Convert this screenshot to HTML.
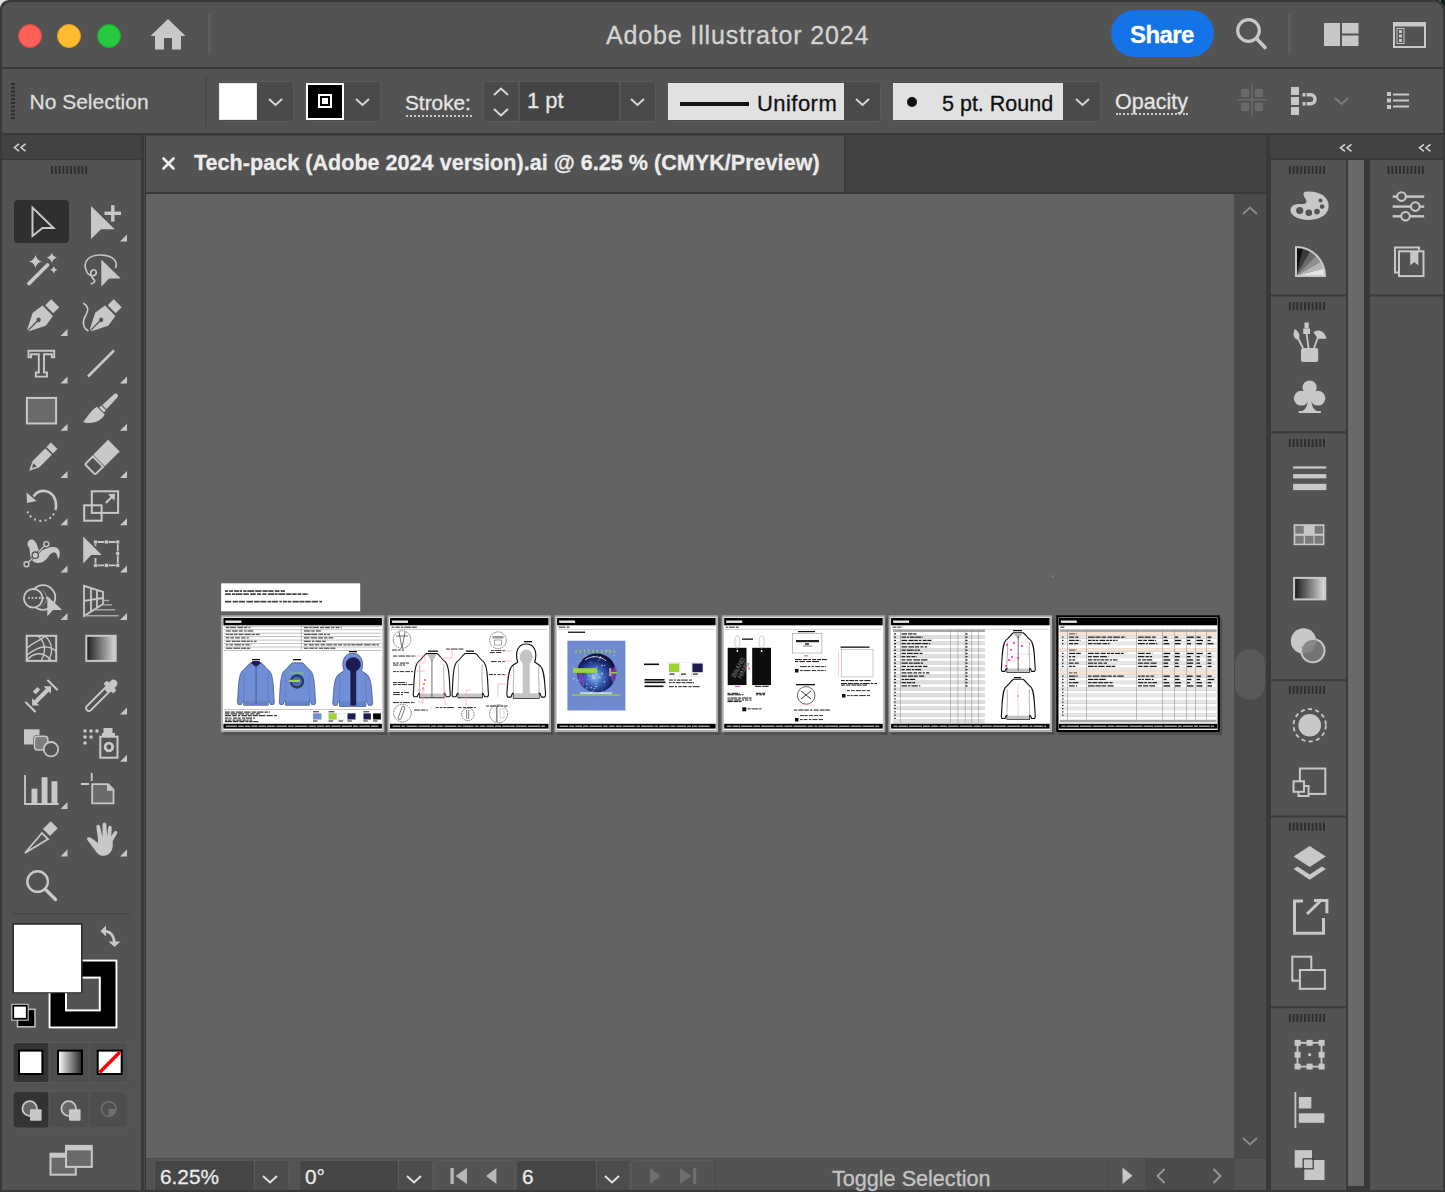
<!DOCTYPE html>
<html><head><meta charset="utf-8">
<style>
*{box-sizing:border-box;margin:0;padding:0}
html,body{width:1445px;height:1192px;overflow:hidden;background:#3a3a3a;font-family:"Liberation Sans",sans-serif}
.a{position:absolute}
svg{position:absolute;overflow:visible}
.t{position:absolute;white-space:nowrap;line-height:1;-webkit-text-stroke:0.3px currentColor}
</style></head><body>
<div class="a" style="left:0;top:0;width:1445px;height:1192px;background:#3a3a3a;overflow:hidden">
<div class="a" style="left:0;top:0;width:12px;height:12px;background:#dcdedd"></div><div class="a" style="left:1433px;top:0;width:12px;height:12px;background:#0c1d22"></div><div class="a" style="left:1439px;top:0;width:2px;height:4px;background:#4a7a3a"></div>
<!-- window -->
<div class="a" id="win" style="left:0;top:0;width:1445px;height:1192px;background:#393939;border-radius:9px 9px 0 0;overflow:hidden">

<!-- title bar -->
<div class="a" style="left:2px;top:2px;width:1441px;height:65px;background:#535353;border-radius:9px 9px 0 0"></div>

<!-- traffic lights -->
<div class="a" style="left:18px;top:24px;width:24px;height:24px;border-radius:50%;background:#fe5f57;border:1px solid #e2463f"></div>
<div class="a" style="left:57px;top:24px;width:24px;height:24px;border-radius:50%;background:#febc2e;border:1px solid #e1a325"></div>
<div class="a" style="left:97px;top:24px;width:24px;height:24px;border-radius:50%;background:#28c840;border:1px solid #1aab29"></div>
<!-- home -->
<svg style="left:150px;top:19px" width="36" height="31" viewBox="0 0 36 31"><path d="M18 0 L35.5 17 L31 17 L31 30.5 L22 30.5 L22 19 L14 19 L14 30.5 L5 30.5 L5 17 L0.5 17 Z" fill="#c8c8c8"/></svg>
<div class="a" style="left:208px;top:14px;width:3px;height:39px;background:#5c5c5c"></div>
<div class="t" style="left:606px;top:22.5px;font-size:25px;letter-spacing:0.85px;color:#d4d4d4">Adobe Illustrator 2024</div>
<!-- share -->
<div class="a" style="left:1111px;top:10px;width:103px;height:47px;border-radius:24px;background:#1473e6"></div>
<div class="t" style="left:1130px;top:23px;font-size:24px;font-weight:bold;letter-spacing:-0.6px;color:#fff">Share</div>
<!-- search -->
<svg style="left:1235px;top:18px" width="32" height="32" viewBox="0 0 32 32"><circle cx="13.5" cy="12.5" r="10.8" fill="none" stroke="#c8c8c8" stroke-width="3.2"/><path d="M21.5 20.5 L30 29.5" stroke="#c8c8c8" stroke-width="3.6" stroke-linecap="round"/></svg>
<div class="a" style="left:1288px;top:14px;width:3px;height:39px;background:#5c5c5c"></div>
<!-- workspace icon -->
<svg style="left:1324px;top:23px" width="35" height="23" viewBox="0 0 35 23"><rect x="0" y="0" width="16" height="23" fill="#c8c8c8"/><rect x="18" y="0" width="16.5" height="10.5" fill="#c8c8c8"/><rect x="18" y="12.5" width="16.5" height="10.5" fill="#c8c8c8"/></svg>
<!-- window icon -->
<svg style="left:1393px;top:22px" width="33" height="26" viewBox="0 0 33 26"><rect x="1" y="1" width="31" height="24" fill="none" stroke="#c8c8c8" stroke-width="2"/><rect x="1" y="1" width="31" height="3.5" fill="#c8c8c8"/><rect x="6" y="8" width="3" height="3" fill="#c8c8c8"/><rect x="6" y="12.5" width="3" height="3" fill="#c8c8c8"/><rect x="6" y="17" width="3" height="3" fill="#c8c8c8"/><rect x="4" y="6.5" width="7" height="15" fill="none" stroke="#c8c8c8" stroke-width="1"/></svg>

<!-- control bar -->
<div class="a" style="left:2px;top:69px;width:1441px;height:64px;background:#535353"></div>

<!-- grip -->
<svg style="left:11px;top:83px" width="5" height="38" viewBox="0 0 5 38"><rect x="0" y="0.0" width="4" height="2" fill="#2e2e2e"/><rect x="0" y="3.8" width="4" height="2" fill="#2e2e2e"/><rect x="0" y="7.6" width="4" height="2" fill="#2e2e2e"/><rect x="0" y="11.399999999999999" width="4" height="2" fill="#2e2e2e"/><rect x="0" y="15.2" width="4" height="2" fill="#2e2e2e"/><rect x="0" y="19.0" width="4" height="2" fill="#2e2e2e"/><rect x="0" y="22.799999999999997" width="4" height="2" fill="#2e2e2e"/><rect x="0" y="26.599999999999998" width="4" height="2" fill="#2e2e2e"/><rect x="0" y="30.4" width="4" height="2" fill="#2e2e2e"/><rect x="0" y="34.199999999999996" width="4" height="2" fill="#2e2e2e"/></svg>
<div class="t" style="left:29.5px;top:90.8px;font-size:21px;color:#dcdcdc">No Selection</div>
<div class="a" style="left:205px;top:77px;width:2px;height:49px;background:#4b4b4b"></div>
<!-- fill -->
<div class="a" style="left:218px;top:81px;width:76px;height:41px;border-radius:4px;background:#4a4a4a;border:1px solid #5a5a5a"></div>
<div class="a" style="left:219px;top:83px;width:38px;height:37px;background:#fff;border:1px solid #e8e8e8"></div>
<svg style="left:268px;top:98px" width="15" height="8" viewBox="0 0 15 8"><path d="M1 1 L7.5 7 L14 1" fill="none" stroke="#d8d8d8" stroke-width="2"/></svg>
<!-- stroke -->
<div class="a" style="left:305px;top:81px;width:76px;height:41px;border-radius:4px;background:#4a4a4a;border:1px solid #5a5a5a"></div>
<div class="a" style="left:306px;top:83px;width:38px;height:37px;background:#000;border:2px solid #fff"></div>
<div class="a" style="left:318px;top:94px;width:14px;height:14px;border:2px solid #fff"></div>
<div class="a" style="left:322px;top:98px;width:6px;height:6px;background:#fff"></div>
<svg style="left:355px;top:98px" width="15" height="8" viewBox="0 0 15 8"><path d="M1 1 L7.5 7 L14 1" fill="none" stroke="#d8d8d8" stroke-width="2"/></svg>
<div class="t" style="left:405px;top:93px;font-size:20.8px;color:#e6e6e6">Stroke:</div>
<div class="a" style="left:406px;top:115px;width:66px;height:0;border-top:2px dotted #c8c8c8"></div>
<!-- stroke weight -->
<div class="a" style="left:483px;top:81px;width:173px;height:41px;border-radius:4px;background:#4a4a4a;border:1px solid #5a5a5a"></div>
<div class="a" style="left:518px;top:82px;width:2px;height:39px;background:#555"></div>
<div class="a" style="left:520px;top:82px;width:99px;height:39px;background:#444"></div>
<div class="a" style="left:619px;top:82px;width:2px;height:39px;background:#555"></div>
<svg style="left:493px;top:87px" width="16" height="30" viewBox="0 0 16 30"><path d="M1 8 L8 1.5 L15 8 M1 22 L8 28.5 L15 22" fill="none" stroke="#d8d8d8" stroke-width="2"/></svg>
<div class="t" style="left:527px;top:89.8px;font-size:22px;color:#e6e6e6">1 pt</div>
<svg style="left:630px;top:98px" width="15" height="8" viewBox="0 0 15 8"><path d="M1 1 L7.5 7 L14 1" fill="none" stroke="#d8d8d8" stroke-width="2"/></svg>
<!-- uniform -->
<div class="a" style="left:667px;top:81px;width:214px;height:41px;border-radius:4px;background:#4a4a4a;border:1px solid #5a5a5a"></div>
<div class="a" style="left:668px;top:83px;width:176px;height:37px;background:#e1e1e1"></div>
<div class="a" style="left:680px;top:101.5px;width:69px;height:4px;background:#111"></div>
<div class="t" style="left:757px;top:93.3px;font-size:22px;letter-spacing:0.45px;color:#111">Uniform</div>
<svg style="left:855px;top:98px" width="15" height="8" viewBox="0 0 15 8"><path d="M1 1 L7.5 7 L14 1" fill="none" stroke="#d8d8d8" stroke-width="2"/></svg>
<!-- 5pt round -->
<div class="a" style="left:892px;top:81px;width:209px;height:41px;border-radius:4px;background:#4a4a4a;border:1px solid #5a5a5a"></div>
<div class="a" style="left:893px;top:83px;width:170px;height:37px;background:#e1e1e1"></div>
<div class="a" style="left:907px;top:97px;width:10px;height:10px;border-radius:50%;background:#111"></div>
<div class="t" style="left:942px;top:93.5px;font-size:21.5px;color:#111">5 pt. Round</div>
<div class="a" style="left:1063px;top:82px;width:2px;height:39px;background:#4a4a4a"></div>
<svg style="left:1075px;top:98px" width="15" height="8" viewBox="0 0 15 8"><path d="M1 1 L7.5 7 L14 1" fill="none" stroke="#d8d8d8" stroke-width="2"/></svg>
<div class="t" style="left:1115px;top:92px;font-size:21.5px;color:#e6e6e6">Opacity</div>
<div class="a" style="left:1116px;top:113px;width:72px;height:0;border-top:2px dotted #c8c8c8"></div>
<!-- grid icon dim -->
<svg style="left:1237px;top:85px" width="30" height="30" viewBox="0 0 30 30"><rect x="4" y="4" width="8" height="8" fill="#6a6a6a"/><rect x="18" y="4" width="8" height="8" fill="#6a6a6a"/><rect x="4" y="18" width="8" height="8" fill="#6a6a6a"/><rect x="18" y="18" width="8" height="8" fill="#6a6a6a"/><rect x="0" y="14" width="30" height="1.5" fill="#6a6a6a"/><rect x="14.2" y="0" width="1.5" height="30" fill="#6a6a6a"/></svg>
<!-- magnet -->
<svg style="left:1291px;top:87px" width="30" height="28" viewBox="0 0 30 28"><rect x="0" y="0" width="8" height="8" fill="#c8c8c8"/><rect x="0" y="10" width="8" height="8" fill="#c8c8c8"/><rect x="0" y="20" width="8" height="8" fill="#c8c8c8"/><path d="M11.5 6 L19.5 6 A6.2 6.2 0 0 1 19.5 18.5 L11.5 18.5 L11.5 15 L19.5 15 A2.7 2.7 0 0 0 19.5 9.5 L11.5 9.5 Z" fill="#c8c8c8"/><rect x="14.5" y="5" width="1.2" height="14.5" fill="#535353"/></svg>
<svg style="left:1334px;top:97px" width="15" height="8" viewBox="0 0 15 8"><path d="M1 1 L7.5 7 L14 1" fill="none" stroke="#7a7a7a" stroke-width="2"/></svg>
<!-- list icon -->
<svg style="left:1387px;top:92px" width="23" height="18" viewBox="0 0 23 18"><rect x="0" y="0" width="4" height="4" fill="#c8c8c8"/><rect x="0" y="6.5" width="4" height="4" fill="#c8c8c8"/><rect x="0" y="13" width="4" height="4" fill="#c8c8c8"/><rect x="6" y="1.5" width="16" height="2" fill="#c8c8c8"/><rect x="6" y="7.5" width="16" height="2" fill="#c8c8c8"/><rect x="6" y="13.5" width="16" height="2" fill="#c8c8c8"/></svg>

<!-- left panel header -->
<div class="a" style="left:2px;top:135px;width:139px;height:24px;background:#424242"></div>
<!-- left panel body -->
<div class="a" style="left:2px;top:160px;width:139px;height:1030px;background:#535353"></div>
<div class="a" style="left:0;top:0;width:0;height:0">
<svg style="left:13px;top:143px" width="14" height="9" viewBox="0 0 14 9"><path d="M6 0.8 L1.5 4.5 L6 8.2 M12.5 0.8 L8 4.5 L12.5 8.2" fill="none" stroke="#d0d0d0" stroke-width="1.6"/></svg>
<svg style="left:51.0px;top:166.0px" width="38" height="8" viewBox="0 0 38 8"><rect x="0.0" y="0" width="2" height="8" fill="#2e2e2e"/><rect x="3.8" y="0" width="2" height="8" fill="#2e2e2e"/><rect x="7.6" y="0" width="2" height="8" fill="#2e2e2e"/><rect x="11.4" y="0" width="2" height="8" fill="#2e2e2e"/><rect x="15.2" y="0" width="2" height="8" fill="#2e2e2e"/><rect x="19.0" y="0" width="2" height="8" fill="#2e2e2e"/><rect x="22.8" y="0" width="2" height="8" fill="#2e2e2e"/><rect x="26.6" y="0" width="2" height="8" fill="#2e2e2e"/><rect x="30.4" y="0" width="2" height="8" fill="#2e2e2e"/><rect x="34.2" y="0" width="2" height="8" fill="#2e2e2e"/></svg>
</div>
<svg style="left:0;top:0" width="145" height="1192" viewBox="0 0 145 1192"><rect x="14" y="200" width="55" height="43" rx="4" fill="#2f2f2f"/><path d="M32.5 207.5 L32.5 236 L42.5 228 L53.5 228 Z" fill="#2f2f2f" stroke="#c8c8c8" stroke-width="2" stroke-linejoin="miter"/><path d="M91 206 L91 239 L101 229.2 L114.7 229.2 Z" fill="#c8c8c8"/><rect x="104.5" y="211.6" width="16.5" height="3.4" fill="#c8c8c8"/><rect x="111.1" y="205.2" width="3.4" height="16.5" fill="#c8c8c8"/><path d="M120 241.5 L127 241.5 L127 234.5 Z" fill="#c8c8c8"/><path d="M29 283.5 L47.5 265" stroke="#c8c8c8" stroke-width="3.8" stroke-linecap="round"/><path d="M35.5 255.0 Q36.7 260.3 42.0 261.5 Q36.7 262.7 35.5 268.0 Q34.3 262.7 29.0 261.5 Q34.3 260.3 35.5 255.0 Z" fill="#c8c8c8"/><path d="M51.8 252.8 Q52.8 256.8 56.8 257.8 Q52.8 258.8 51.8 262.8 Q50.8 258.8 46.8 257.8 Q50.8 256.8 51.8 252.8 Z" fill="#c8c8c8"/><path d="M53.8 266.2 Q54.5 269.1 57.4 269.8 Q54.5 270.5 53.8 273.40000000000003 Q53.099999999999994 270.5 50.199999999999996 269.8 Q53.099999999999994 269.1 53.8 266.2 Z" fill="#c8c8c8"/><path d="M101.3 259.6 L101.3 286.7 L109 278.5 L120.7 278.5 Z" fill="#c8c8c8"/><path d="M115.5 268 C118 262 114 255.5 101 255 C88 254.8 83 262 86 270 C87.5 275 92 277 95 275 C97.5 273 96 268.5 92.5 270 C89 272 91.5 278 94 279.5 C96 282 93 283.5 90.5 284" fill="none" stroke="#c8c8c8" stroke-width="1.6"/><g transform="translate(41.2 317.3) rotate(45) scale(1.13)"><rect x="-5" y="-17.5" width="10" height="7.5" fill="#c8c8c8"/><path d="M-6.5 -8.2 L6.5 -8.2 L8.2 2.5 L1 16.5 L-1 16.5 L-8.2 2.5 Z" fill="#c8c8c8"/><circle cx="0" cy="3.2" r="1.9" fill="#535353"/><rect x="-0.6" y="3.5" width="1.2" height="13.5" fill="#535353"/></g><path d="M60.5 336.1 L67.5 336.1 L67.5 329.1 Z" fill="#c8c8c8"/><g transform="translate(103.7 317.3) rotate(45) scale(1.13)"><rect x="-5" y="-17.5" width="10" height="7.5" fill="#c8c8c8"/><path d="M-6.5 -8.2 L6.5 -8.2 L8.2 2.5 L1 16.5 L-1 16.5 L-8.2 2.5 Z" fill="#c8c8c8"/><circle cx="0" cy="3.2" r="1.9" fill="#535353"/><rect x="-0.6" y="3.5" width="1.2" height="13.5" fill="#535353"/></g><path d="M83.4 303 C88 306 89 310 86 315 C82 321 82.5 328 88.5 331" fill="none" stroke="#c8c8c8" stroke-width="1.6"/><path d="M28.5 350.8 L54.2 350.8 L54.2 357.2 L51.8 357.2 L51.8 354.2 L44 354.2 L44 372.5 L47 372.5 L47 376.6 L35.8 376.6 L35.8 372.5 L38.8 372.5 L38.8 354.2 L31 354.2 L31 357.2 L28.5 357.2 Z" fill="#535353" stroke="#c8c8c8" stroke-width="1.9"/><path d="M60.5 383.4 L67.5 383.4 L67.5 376.4 Z" fill="#c8c8c8"/><path d="M88 376.5 L114 350.5" stroke="#c8c8c8" stroke-width="2.6"/><path d="M120 383.4 L127 383.4 L127 376.4 Z" fill="#c8c8c8"/><rect x="26.9" y="397.9" width="29.2" height="25.6" fill="#6a6a6a" stroke="#c8c8c8" stroke-width="2"/><path d="M60.5 430.7 L67.5 430.7 L67.5 423.7 Z" fill="#c8c8c8"/><g transform="translate(100.8 410.7) rotate(45)"><path d="M-2.3 -21 C-2.3 -24 2.3 -24 2.3 -21 L3 -5 L-3 -5 Z" fill="#c8c8c8"/><rect x="-3.4" y="-4" width="6.8" height="3" fill="#c8c8c8"/><path d="M-5.5 0 L5.5 0 C7 5 6 11 2 15 C0 17.5 -2 19.5 -4.5 20.5 C-4.5 15 -7.5 8 -5.5 0 Z" fill="#c8c8c8"/></g><path d="M120 430.7 L127 430.7 L127 423.7 Z" fill="#c8c8c8"/><g transform="translate(41.5 458.5) rotate(45)"><rect x="-4.6" y="-18" width="9.2" height="6.5" fill="#c8c8c8"/><path d="M-4.6 -10 L4.6 -10 L4.6 8 L0 17.5 L-4.6 8 Z" fill="#c8c8c8"/><path d="M-2.4 9 L2.4 9 L0 13.5 Z" fill="#535353"/></g><path d="M60.5 478.0 L67.5 478.0 L67.5 471.0 Z" fill="#c8c8c8"/><g transform="translate(101.5 458) rotate(45)"><rect x="-8.2" y="-17.5" width="16.4" height="21" fill="#c8c8c8"/><path d="M-7.2 5 L7.2 5 L7.2 14.5 C7.2 15.5 6.5 16.2 5.5 16.2 L-5.5 16.2 C-6.5 16.2 -7.2 15.5 -7.2 14.5 Z" fill="none" stroke="#c8c8c8" stroke-width="2"/></g><path d="M120 478.0 L127 478.0 L127 471.0 Z" fill="#c8c8c8"/><path d="M33.5 496.5 C37 491.5 42 490.5 45 491 C52 492 56.5 498 56 507 C55.8 508.5 55.5 509.5 55.2 510" fill="none" stroke="#c8c8c8" stroke-width="2.6"/><path d="M26.5 492.5 L27 503 L36.5 501 Z" fill="#c8c8c8"/><circle cx="27.8" cy="512.3" r="1.15" fill="#c8c8c8"/><circle cx="30.6" cy="516.5" r="1.15" fill="#c8c8c8"/><circle cx="35" cy="519.6" r="1.15" fill="#c8c8c8"/><circle cx="40.3" cy="521" r="1.15" fill="#c8c8c8"/><circle cx="45.6" cy="520.3" r="1.15" fill="#c8c8c8"/><circle cx="50.2" cy="518" r="1.15" fill="#c8c8c8"/><circle cx="53.5" cy="514.5" r="1.15" fill="#c8c8c8"/><path d="M60.5 525.3 L67.5 525.3 L67.5 518.3 Z" fill="#c8c8c8"/><rect x="91.8" y="491.3" width="26.3" height="21.6" fill="none" stroke="#c8c8c8" stroke-width="2"/><rect x="84.2" y="505.3" width="17.4" height="15.4" fill="none" stroke="#c8c8c8" stroke-width="2"/><path d="M105.8 503 L113 495.8" stroke="#c8c8c8" stroke-width="2"/><path d="M108 494.2 L115 493.8 L114.6 500.8 Z" fill="#c8c8c8"/><path d="M120 525.3 L127 525.3 L127 518.3 Z" fill="#c8c8c8"/><path d="M27.6 545.5 C27 541.5 29.5 539 31.8 539.5 C35 540.2 36.8 543 38 548 C38.8 550.5 40.5 551 43 550 C47 548 51 546.2 55.5 547.2 C59 548 60.5 552 59.6 555 C59.3 557 59 558.5 58.4 559 C57.8 558.5 57.5 556 56.8 554.5 C56 552.8 54.5 552.2 53 552.6 C50 553.5 48.5 557.5 45.5 560 C43 562.5 39.5 563.6 36 562.8 C32 561.8 30.3 558 30 553.5 C29.8 550 29.5 547 27.6 545.5 Z" fill="#c8c8c8"/><path d="M26.5 564.2 L46.3 544.1" stroke="#535353" stroke-width="2.6"/><path d="M26.5 564.2 L46.3 544.1" stroke="#c8c8c8" stroke-width="1.3"/><circle cx="35.3" cy="555.2" r="3.2" fill="#c8c8c8" stroke="#535353" stroke-width="1.3"/><circle cx="26.5" cy="564.2" r="2.5" fill="#535353" stroke="#c8c8c8" stroke-width="1.4"/><circle cx="46.3" cy="544.1" r="2.5" fill="#535353" stroke="#c8c8c8" stroke-width="1.4"/><path d="M60.5 572.5999999999999 L67.5 572.5999999999999 L67.5 565.5999999999999 Z" fill="#c8c8c8"/><path d="M83.2 536.5 L83.2 563.5 L91.2 555.1 L101.8 555.1 Z" fill="#c8c8c8"/><path d="M95.5 546 L95.5 542 L117.8 542 L117.8 565.3 L95.5 565.3 L95.5 558" fill="none" stroke="#c8c8c8" stroke-width="1.8"/><rect x="93.6" y="540.1" width="3.8" height="3.8" fill="#c8c8c8" stroke="#535353" stroke-width="0.6"/><rect x="104.69999999999999" y="540.1" width="3.8" height="3.8" fill="#c8c8c8" stroke="#535353" stroke-width="0.6"/><rect x="115.89999999999999" y="540.1" width="3.8" height="3.8" fill="#c8c8c8" stroke="#535353" stroke-width="0.6"/><rect x="115.89999999999999" y="551.7" width="3.8" height="3.8" fill="#c8c8c8" stroke="#535353" stroke-width="0.6"/><rect x="115.89999999999999" y="563.4" width="3.8" height="3.8" fill="#c8c8c8" stroke="#535353" stroke-width="0.6"/><rect x="104.69999999999999" y="563.4" width="3.8" height="3.8" fill="#c8c8c8" stroke="#535353" stroke-width="0.6"/><rect x="93.6" y="563.4" width="3.8" height="3.8" fill="#c8c8c8" stroke="#535353" stroke-width="0.6"/><path d="M120 572.5999999999999 L127 572.5999999999999 L127 565.5999999999999 Z" fill="#c8c8c8"/><circle cx="43" cy="597.5" r="12.3" fill="none" stroke="#c8c8c8" stroke-width="1.8"/><circle cx="33.2" cy="598.3" r="9.3" fill="#535353" stroke="#c8c8c8" stroke-width="1.8"/><path d="M42 590 A9.3 9.3 0 0 1 42 606" fill="none" stroke="#888" stroke-width="1"/><rect x="28.0" y="597" width="1.8" height="1.8" fill="#c8c8c8"/><rect x="31.6" y="597" width="1.8" height="1.8" fill="#c8c8c8"/><rect x="35.2" y="597" width="1.8" height="1.8" fill="#c8c8c8"/><rect x="38.8" y="597" width="1.8" height="1.8" fill="#c8c8c8"/><rect x="42.4" y="597" width="1.8" height="1.8" fill="#c8c8c8"/><rect x="46.0" y="597" width="1.8" height="1.8" fill="#c8c8c8"/><path d="M47.3 596 L47.3 616.5 L53 610 L62.2 610 Z" fill="#c8c8c8"/><path d="M60.5 619.9 L67.5 619.9 L67.5 612.9 Z" fill="#c8c8c8"/><path d="M84 585.8 L84 616 L103 604 L103 592 Z M91 587.6 L91 611.7 M97 589.2 L97 607.9 M84 600.8 L103 598" fill="none" stroke="#c8c8c8" stroke-width="1.8"/><path d="M103 600.5 L109 600.5" stroke="#a9a9a9" stroke-width="1.4"/><path d="M102 604.8 L112 604.8" stroke="#a9a9a9" stroke-width="1.4"/><path d="M94.5 609.8 L115 609.8" stroke="#a9a9a9" stroke-width="1.4"/><path d="M85 615.8 L118.5 615.8" stroke="#a9a9a9" stroke-width="1.4"/><path d="M120 619.9 L127 619.9 L127 612.9 Z" fill="#c8c8c8"/><rect x="26.7" y="635.8" width="29.5" height="25.1" fill="none" stroke="#c8c8c8" stroke-width="2"/><path d="M27 648 C35 641 42 640 45 636 M27 660 C35 651 44 652 52 661 M38 636 C46 643 46 652 41 661 M45 636 C52 642 54 652 48 661 M27 655 C40 645 48 645 56 651" fill="none" stroke="#c8c8c8" stroke-width="1.3"/><defs><linearGradient id="tg" x1="0" x2="1"><stop offset="0" stop-color="#1c1c1c"/><stop offset="1" stop-color="#d8d8d8"/></linearGradient><linearGradient id="tg2" x1="0" x2="1"><stop offset="0" stop-color="#ffffff"/><stop offset="1" stop-color="#222"/></linearGradient></defs><rect x="86.3" y="635.8" width="29.4" height="25.1" fill="url(#tg)" stroke="#c8c8c8" stroke-width="2"/><path d="M26 702.5 L35 711.5 M48 680.5 L57 689.5" stroke="#c8c8c8" stroke-width="2.1" stroke-linecap="round"/><path d="M35.5 702 L47.5 690" stroke="#c8c8c8" stroke-width="4"/><path d="M43.6 686.3 L51 686.3 L51 693.7 Z M32.1 698.2 L32.1 705.4 L39.3 705.4 Z" fill="#c8c8c8"/><path d="M34.3 692.8 L38.8 688.3" stroke="#c8c8c8" stroke-width="4"/><g transform="translate(101 696) rotate(45) scale(1.18)"><path d="M-3.2 -12 L-3.2 -15 A3.2 3.2 0 0 1 3.2 -15 L3.2 -12 Z" fill="#c8c8c8"/><rect x="-5.8" y="-12.8" width="11.6" height="4" rx="1" fill="#c8c8c8"/><rect x="-3.2" y="-9" width="6.4" height="3" fill="#c8c8c8"/><path d="M-2.4 -6 L-2.4 14.5 A2.4 2.4 0 0 0 2.4 14.5 L2.4 -6" fill="none" stroke="#c8c8c8" stroke-width="1.6"/></g><path d="M120 714.5 L127 714.5 L127 707.5 Z" fill="#c8c8c8"/><rect x="24" y="729.3" width="15.5" height="15.2" fill="#c8c8c8"/><rect x="33.2" y="734.9" width="15.9" height="16.3" rx="4" fill="#535353"/><rect x="34.5" y="736.2" width="13.3" height="13.7" rx="3" fill="#7d7d7d" stroke="#c8c8c8" stroke-width="1.5"/><circle cx="51" cy="749.2" r="7.2" fill="#535353" stroke="#c8c8c8" stroke-width="1.8"/><circle cx="85" cy="731" r="1.8" fill="#c8c8c8"/><circle cx="91" cy="731" r="1.8" fill="#c8c8c8"/><circle cx="97" cy="731" r="1.8" fill="#c8c8c8"/><circle cx="85" cy="737" r="1.8" fill="#c8c8c8"/><circle cx="91" cy="737" r="1.8" fill="#c8c8c8"/><circle cx="85" cy="743" r="1.8" fill="#c8c8c8"/><rect x="100.3" y="736.7" width="17.2" height="21" fill="none" stroke="#c8c8c8" stroke-width="2"/><rect x="103.5" y="728" width="9" height="6" fill="#c8c8c8"/><rect x="102" y="733" width="13" height="3.5" fill="#c8c8c8"/><circle cx="108.9" cy="747" r="3.8" fill="none" stroke="#c8c8c8" stroke-width="2.8"/><path d="M120 761.8 L127 761.8 L127 754.8 Z" fill="#c8c8c8"/><path d="M25 775 L25 804 L58.6 804" fill="none" stroke="#c8c8c8" stroke-width="1.8"/><rect x="31.5" y="788.7" width="5.9" height="15" fill="#c8c8c8"/><rect x="41.6" y="777.2" width="5.9" height="26.5" fill="#c8c8c8"/><rect x="51.5" y="781.2" width="5.9" height="22.5" fill="#c8c8c8"/><path d="M60.5 809.0999999999999 L67.5 809.0999999999999 L67.5 802.0999999999999 Z" fill="#c8c8c8"/><path d="M81 784 L89 784 M91.7 773 L91.7 781" stroke="#c8c8c8" stroke-width="1.8"/><path d="M92.2 784.2 L108 784.2 L113.5 789.7 L113.5 803.4 L92.2 803.4 Z" fill="#6a6a6a" stroke="#c8c8c8" stroke-width="1.8"/><path d="M107 784.2 L107 790.7 L113.5 790.7 Z" fill="#c8c8c8"/><path d="M25 853 L42 833 L48 839 Z" fill="none" stroke="#c8c8c8" stroke-width="1.8" stroke-linejoin="miter"/><g transform="translate(50 829) rotate(45)"><rect x="-5" y="-6" width="10" height="11" fill="#c8c8c8"/></g><path d="M60.5 856.4 L67.5 856.4 L67.5 849.4 Z" fill="#c8c8c8"/><g transform="translate(101 840) scale(1.02) translate(-101 -838)"><path d="M91.5 836 C88.5 834.5 86 836 88 838.5 L94.5 847 C97 851 100 854 104 853.5 C110 853 112.5 848 112.5 843 L112.5 839 L116.5 832 C118 829.5 115.5 828 113.8 830 L111 834.5 L111.5 826.5 C111.8 823.5 108.5 823.3 108 826 L107 835 L106.3 823 C106.2 820 102.5 820 102.5 823 L102.4 835 L100.2 825 C99.6 822 96 822.5 96.5 825.5 L98 837 L98 841 Z" fill="#c8c8c8"/></g><path d="M120 856.4 L127 856.4 L127 849.4 Z" fill="#c8c8c8"/><circle cx="37.6" cy="881.6" r="10.3" fill="none" stroke="#c8c8c8" stroke-width="2.4"/><path d="M45.3 889.3 L55.5 899.5" stroke="#c8c8c8" stroke-width="3.4" stroke-linecap="round"/><rect x="12" y="913.3" width="118" height="1.2" fill="#474747"/><rect x="48" y="959.1" width="70" height="70" fill="#2e2e2e"/><rect x="49.5" y="960.5" width="67" height="67" fill="#000" stroke="#fff" stroke-width="2"/><rect x="66" y="977.6" width="33.8" height="32.8" fill="#535353" stroke="#fff" stroke-width="2"/><rect x="12.4" y="923.1" width="70.2" height="70.2" fill="#2e2e2e"/><rect x="14" y="924.8" width="67" height="67.4" fill="#fff"/><path d="M103 931 C110 931 114 935 114.5 943" fill="none" stroke="#c8c8c8" stroke-width="2.6"/><path d="M100.5 931 L106 925.5 L106 936.5 Z M108.5 941.5 L120.5 941.5 L114.5 947 Z" fill="#c8c8c8"/><rect x="17.5" y="1009.3" width="17.5" height="17.5" fill="#000" stroke="#bbb" stroke-width="1.6"/><rect x="13" y="1005.5" width="14" height="13.5" fill="#fff" stroke="#000" stroke-width="2.2"/><rect x="11.8" y="1004.3" width="16.4" height="15.9" fill="none" stroke="#bbb" stroke-width="1.2"/><rect x="13.1" y="1042.5" width="114.8" height="40" rx="4" fill="#4e4e4e" stroke="#5a5a5a" stroke-width="1"/><rect x="13.6" y="1043" width="35" height="39" rx="3" fill="#333"/><rect x="48.6" y="1043" width="1" height="39" fill="#5a5a5a"/><rect x="88.9" y="1043" width="1" height="39" fill="#5a5a5a"/><rect x="19" y="1050.6" width="23.4" height="23.4" fill="#fff" stroke="#000" stroke-width="2"/><rect x="58" y="1050.6" width="24" height="23.4" fill="url(#tg2)" stroke="#000" stroke-width="2"/><rect x="97.7" y="1050.6" width="24" height="23.4" fill="#fff" stroke="#000" stroke-width="2"/><path d="M99.5 1072.5 L120 1052" stroke="#f00" stroke-width="3.6"/><rect x="13.1" y="1091.6" width="114.8" height="36.4" rx="4" fill="#4e4e4e" stroke="#5a5a5a" stroke-width="1"/><rect x="13.6" y="1092.1" width="35" height="35.4" rx="3" fill="#333"/><rect x="48.6" y="1092" width="1" height="36" fill="#5a5a5a"/><rect x="88.9" y="1092" width="1" height="36" fill="#5a5a5a"/><circle cx="29.7" cy="1108.5" r="7.3" fill="#666" stroke="#c8c8c8" stroke-width="1.8"/><rect x="30" y="1109.2" width="11.6" height="11.6" rx="1" fill="#c8c8c8"/><circle cx="68.7" cy="1108.5" r="7.3" fill="#666" stroke="#c8c8c8" stroke-width="1.8"/><rect x="69" y="1109.2" width="11.6" height="11.6" rx="1" fill="#c8c8c8"/><circle cx="108.7" cy="1109.1" r="7.3" fill="none" stroke="#6e6e6e" stroke-width="1.6"/><path d="M108.7 1109.1 L116 1109.1 A7.3 7.3 0 0 1 108.7 1116.4 Z" fill="#6e6e6e"/><rect x="50.5" y="1153.7" width="25.3" height="21" fill="#6a6a6a" stroke="#c8c8c8" stroke-width="2"/><rect x="50.5" y="1153.7" width="25.3" height="4" fill="#c8c8c8"/><rect x="66" y="1145.9" width="25.8" height="21" fill="#6a6a6a" stroke="#c8c8c8" stroke-width="2"/><rect x="66" y="1145.9" width="25.8" height="4.5" fill="#c8c8c8"/></svg>
<!-- doc tab bar -->
<div class="a" style="left:146px;top:135px;width:1120px;height:57px;background:#424242"></div>
<div class="a" style="left:146px;top:136px;width:698px;height:56px;background:#535353"></div>
<div class="a" style="left:143.5px;top:135px;width:1.8px;height:1055px;background:#474747"></div>
<!-- canvas -->
<div class="a" style="left:146px;top:194px;width:1088px;height:964px;background:#636363"></div>
<!-- v scrollbar -->
<div class="a" style="left:1234px;top:194px;width:32px;height:964px;background:#4b4b4b"></div>
<!-- status bar -->
<div class="a" style="left:146px;top:1158px;width:1120px;height:32px;background:#535353"></div>
<!-- right header -->
<div class="a" style="left:1270px;top:135px;width:173px;height:23px;background:#424242"></div>
<!-- right col1 -->
<div class="a" style="left:1271px;top:160px;width:75px;height:1030px;background:#535353"></div>
<div class="a" style="left:1348px;top:160px;width:16px;height:1026px;background:#696969"></div>
<div class="a" style="left:1370px;top:160px;width:73px;height:1030px;background:#535353"></div>
<svg style="left:0;top:0" width="1445" height="1192" viewBox="0 0 1445 1192"><path d="M1345.0 144.3 L1340.5 147.8 L1345.0 151.3 M1351.5 144.3 L1347.0 147.8 L1351.5 151.3" fill="none" stroke="#d0d0d0" stroke-width="1.6"/><path d="M1424.0 144.3 L1419.5 147.8 L1424.0 151.3 M1430.5 144.3 L1426.0 147.8 L1430.5 151.3" fill="none" stroke="#d0d0d0" stroke-width="1.6"/><rect x="1271" y="294.5" width="75.5" height="2" fill="#3b3b3b"/><rect x="1271" y="431.3" width="75.5" height="2" fill="#3b3b3b"/><rect x="1271" y="679.2" width="75.5" height="2" fill="#3b3b3b"/><rect x="1271" y="815.5" width="75.5" height="2" fill="#3b3b3b"/><rect x="1271" y="1006.3" width="75.5" height="2" fill="#3b3b3b"/><rect x="1370" y="294.5" width="73" height="2" fill="#3b3b3b"/><rect x="1288.8" y="166" width="2" height="8" fill="#2e2e2e"/><rect x="1292.6" y="166" width="2" height="8" fill="#2e2e2e"/><rect x="1296.4" y="166" width="2" height="8" fill="#2e2e2e"/><rect x="1300.2" y="166" width="2" height="8" fill="#2e2e2e"/><rect x="1304.0" y="166" width="2" height="8" fill="#2e2e2e"/><rect x="1307.8" y="166" width="2" height="8" fill="#2e2e2e"/><rect x="1311.6" y="166" width="2" height="8" fill="#2e2e2e"/><rect x="1315.4" y="166" width="2" height="8" fill="#2e2e2e"/><rect x="1319.2" y="166" width="2" height="8" fill="#2e2e2e"/><rect x="1323.0" y="166" width="2" height="8" fill="#2e2e2e"/><rect x="1288.8" y="302.3" width="2" height="8" fill="#2e2e2e"/><rect x="1292.6" y="302.3" width="2" height="8" fill="#2e2e2e"/><rect x="1296.4" y="302.3" width="2" height="8" fill="#2e2e2e"/><rect x="1300.2" y="302.3" width="2" height="8" fill="#2e2e2e"/><rect x="1304.0" y="302.3" width="2" height="8" fill="#2e2e2e"/><rect x="1307.8" y="302.3" width="2" height="8" fill="#2e2e2e"/><rect x="1311.6" y="302.3" width="2" height="8" fill="#2e2e2e"/><rect x="1315.4" y="302.3" width="2" height="8" fill="#2e2e2e"/><rect x="1319.2" y="302.3" width="2" height="8" fill="#2e2e2e"/><rect x="1323.0" y="302.3" width="2" height="8" fill="#2e2e2e"/><rect x="1288.8" y="439" width="2" height="8" fill="#2e2e2e"/><rect x="1292.6" y="439" width="2" height="8" fill="#2e2e2e"/><rect x="1296.4" y="439" width="2" height="8" fill="#2e2e2e"/><rect x="1300.2" y="439" width="2" height="8" fill="#2e2e2e"/><rect x="1304.0" y="439" width="2" height="8" fill="#2e2e2e"/><rect x="1307.8" y="439" width="2" height="8" fill="#2e2e2e"/><rect x="1311.6" y="439" width="2" height="8" fill="#2e2e2e"/><rect x="1315.4" y="439" width="2" height="8" fill="#2e2e2e"/><rect x="1319.2" y="439" width="2" height="8" fill="#2e2e2e"/><rect x="1323.0" y="439" width="2" height="8" fill="#2e2e2e"/><rect x="1288.8" y="686" width="2" height="8" fill="#2e2e2e"/><rect x="1292.6" y="686" width="2" height="8" fill="#2e2e2e"/><rect x="1296.4" y="686" width="2" height="8" fill="#2e2e2e"/><rect x="1300.2" y="686" width="2" height="8" fill="#2e2e2e"/><rect x="1304.0" y="686" width="2" height="8" fill="#2e2e2e"/><rect x="1307.8" y="686" width="2" height="8" fill="#2e2e2e"/><rect x="1311.6" y="686" width="2" height="8" fill="#2e2e2e"/><rect x="1315.4" y="686" width="2" height="8" fill="#2e2e2e"/><rect x="1319.2" y="686" width="2" height="8" fill="#2e2e2e"/><rect x="1323.0" y="686" width="2" height="8" fill="#2e2e2e"/><rect x="1288.8" y="822.8" width="2" height="8" fill="#2e2e2e"/><rect x="1292.6" y="822.8" width="2" height="8" fill="#2e2e2e"/><rect x="1296.4" y="822.8" width="2" height="8" fill="#2e2e2e"/><rect x="1300.2" y="822.8" width="2" height="8" fill="#2e2e2e"/><rect x="1304.0" y="822.8" width="2" height="8" fill="#2e2e2e"/><rect x="1307.8" y="822.8" width="2" height="8" fill="#2e2e2e"/><rect x="1311.6" y="822.8" width="2" height="8" fill="#2e2e2e"/><rect x="1315.4" y="822.8" width="2" height="8" fill="#2e2e2e"/><rect x="1319.2" y="822.8" width="2" height="8" fill="#2e2e2e"/><rect x="1323.0" y="822.8" width="2" height="8" fill="#2e2e2e"/><rect x="1288.8" y="1014" width="2" height="8" fill="#2e2e2e"/><rect x="1292.6" y="1014" width="2" height="8" fill="#2e2e2e"/><rect x="1296.4" y="1014" width="2" height="8" fill="#2e2e2e"/><rect x="1300.2" y="1014" width="2" height="8" fill="#2e2e2e"/><rect x="1304.0" y="1014" width="2" height="8" fill="#2e2e2e"/><rect x="1307.8" y="1014" width="2" height="8" fill="#2e2e2e"/><rect x="1311.6" y="1014" width="2" height="8" fill="#2e2e2e"/><rect x="1315.4" y="1014" width="2" height="8" fill="#2e2e2e"/><rect x="1319.2" y="1014" width="2" height="8" fill="#2e2e2e"/><rect x="1323.0" y="1014" width="2" height="8" fill="#2e2e2e"/><rect x="1387.6" y="166" width="2" height="8" fill="#2e2e2e"/><rect x="1391.4" y="166" width="2" height="8" fill="#2e2e2e"/><rect x="1395.2" y="166" width="2" height="8" fill="#2e2e2e"/><rect x="1399.0" y="166" width="2" height="8" fill="#2e2e2e"/><rect x="1402.8" y="166" width="2" height="8" fill="#2e2e2e"/><rect x="1406.6" y="166" width="2" height="8" fill="#2e2e2e"/><rect x="1410.4" y="166" width="2" height="8" fill="#2e2e2e"/><rect x="1414.2" y="166" width="2" height="8" fill="#2e2e2e"/><rect x="1418.0" y="166" width="2" height="8" fill="#2e2e2e"/><rect x="1421.8" y="166" width="2" height="8" fill="#2e2e2e"/><path d="M1306.5 191.5 C1318 190.5 1329 196 1328.7 206 C1328.5 214 1321 219.8 1309 219.9 C1297 220 1290.3 215 1290.5 210 C1290.7 204.5 1297 203.5 1302 204 C1306 204.5 1308 202 1305 198 C1303 195 1302.5 192 1306.5 191.5 Z" fill="#c8c8c8"/><circle cx="1299.7" cy="210.5" r="3.6" fill="#535353"/><circle cx="1308.8" cy="212.7" r="3.3" fill="#535353"/><circle cx="1317" cy="211.6" r="2.8" fill="#535353"/><circle cx="1322.1" cy="206.6" r="2.3" fill="#535353"/><circle cx="1320.5" cy="200.6" r="2" fill="#535353"/><path d="M1296 276 L1296.00 247.00 A29 29 0 0 1 1303.51 247.99 Z" fill="#111"/><path d="M1296 276 L1303.51 247.99 A29 29 0 0 1 1310.50 250.89 Z" fill="#3a3a3a"/><path d="M1296 276 L1310.50 250.89 A29 29 0 0 1 1316.51 255.49 Z" fill="#6a6a6a"/><path d="M1296 276 L1316.51 255.49 A29 29 0 0 1 1321.11 261.50 Z" fill="#8e8e8e"/><path d="M1296 276 L1321.11 261.50 A29 29 0 0 1 1324.01 268.49 Z" fill="#b5b5b5"/><path d="M1296 276 L1324.01 268.49 A29 29 0 0 1 1325.00 276.00 Z" fill="#e6e6e6"/><path d="M1296 276 L1296 247 A29 29 0 0 1 1325 276 Z" fill="none" stroke="#c8c8c8" stroke-width="2"/><rect x="1392.7" y="195.4" width="31.5" height="2.4" fill="#c8c8c8"/><circle cx="1401.5" cy="196.6" r="4.3" fill="#535353" stroke="#c8c8c8" stroke-width="2"/><rect x="1392.7" y="205.4" width="31.5" height="2.4" fill="#c8c8c8"/><circle cx="1415.3" cy="206.6" r="4.3" fill="#535353" stroke="#c8c8c8" stroke-width="2"/><rect x="1392.7" y="215.10000000000002" width="31.5" height="2.4" fill="#c8c8c8"/><circle cx="1405.5" cy="216.3" r="4.3" fill="#535353" stroke="#c8c8c8" stroke-width="2"/><path d="M1398 272.5 L1395 272.5 L1395 247.4 L1419 247.4 L1419 250.3" fill="none" stroke="#c8c8c8" stroke-width="2"/><rect x="1399" y="251.3" width="24.5" height="24.8" fill="none" stroke="#c8c8c8" stroke-width="2"/><path d="M1410.2 251 L1418.4 251 L1418.4 265.5 L1414.3 262 L1410.2 265.5 Z" fill="#c8c8c8"/><rect x="1301" y="348" width="17.2" height="14" rx="2" fill="#c8c8c8"/><path d="M1303 348 L1298 338" stroke="#c8c8c8" stroke-width="1.8"/><path d="M1295 329 C1292.5 333 1293 338 1297.5 340 C1300.5 338 1300.5 333 1295 329 Z" fill="#c8c8c8"/><path d="M1308.5 348 L1306.5 333" stroke="#c8c8c8" stroke-width="1.8"/><rect x="1303.2" y="328.5" width="6.8" height="5.5" fill="#c8c8c8"/><rect x="1304.5" y="322.5" width="4.2" height="6" fill="#c8c8c8"/><path d="M1314 348 L1318 337" stroke="#c8c8c8" stroke-width="1.8"/><path d="M1313.5 332.5 C1316 329.5 1324 329 1326.5 338.8 L1318 338.8 Z" fill="#c8c8c8"/><circle cx="1309.6" cy="387.5" r="7.1" fill="#c8c8c8"/><circle cx="1301.3" cy="398.2" r="7.4" fill="#c8c8c8"/><circle cx="1317.9" cy="398.2" r="7.4" fill="#c8c8c8"/><circle cx="1309.6" cy="396" r="5" fill="#c8c8c8"/><path d="M1308 396 L1311.2 396 C1311.2 405 1313 409.5 1317 411 L1302.2 411 C1306 409.5 1308 405 1308 396 Z" fill="#c8c8c8"/><rect x="1298.6" y="411" width="22.3" height="2" fill="#c8c8c8"/><rect x="1293.1" y="466.4" width="33.2" height="2.2" fill="#c8c8c8"/><rect x="1293.1" y="474.1" width="33.2" height="4.3" fill="#c8c8c8"/><rect x="1293.1" y="483.8" width="33.2" height="6.3" fill="#c8c8c8"/><rect x="1293.6" y="524.2" width="30.8" height="21" fill="#c8c8c8"/><rect x="1295.3" y="525.9" width="8.4" height="7.8" fill="#7a7a7a"/><rect x="1314.6" y="525.9" width="8.4" height="7.8" fill="#7a7a7a"/><rect x="1295.3" y="535.8" width="8.4" height="7.8" fill="#7a7a7a"/><rect x="1305" y="535.8" width="8.4" height="7.8" fill="#7a7a7a"/><rect x="1314.6" y="535.8" width="8.4" height="7.8" fill="#7a7a7a"/><defs><linearGradient id="rg" x1="0" x2="1"><stop offset="0" stop-color="#151515"/><stop offset="1" stop-color="#e0e0e0"/></linearGradient></defs><rect x="1294.1" y="577.9" width="31.2" height="21.5" fill="url(#rg)" stroke="#c8c8c8" stroke-width="2"/><circle cx="1303.5" cy="640.9" r="12.7" fill="#c8c8c8"/><circle cx="1312.8" cy="650.6" r="11.7" fill="#7a7a7a" fill-opacity="0.85" stroke="#c8c8c8" stroke-width="2"/><path d="M1301 647 A11.7 11.7 0 0 0 1315.5 639.2" fill="none" stroke="#909090" stroke-width="1"/><circle cx="1309.7" cy="725.3" r="11.3" fill="#c8c8c8"/><circle cx="1309.7" cy="725.3" r="16.2" fill="none" stroke="#c8c8c8" stroke-width="1.8" stroke-dasharray="4.2 3.2"/><rect x="1299.9" y="768.5" width="25.4" height="25.4" fill="none" stroke="#c8c8c8" stroke-width="2"/><rect x="1297.5" y="785" width="12" height="12" fill="#c8c8c8"/><rect x="1299.5" y="787" width="8" height="8" fill="#535353"/><rect x="1293.5" y="781.3" width="10.5" height="10.5" fill="#535353" stroke="#c8c8c8" stroke-width="2"/><path d="M1309.7 846 L1325.8 856.5 L1309.7 867 L1293.6 856.5 Z" fill="#c8c8c8"/><path d="M1293.6 869 L1297.5 866.5 L1309.7 874.5 L1321.9 866.5 L1325.8 869 L1309.7 879.7 Z" fill="#c8c8c8"/><path d="M1303 901 L1294.5 901 L1294.5 933.3 L1323.5 933.3 L1323.5 918" fill="none" stroke="#c8c8c8" stroke-width="3"/><path d="M1307 914 L1322 899.5" stroke="#c8c8c8" stroke-width="3"/><path d="M1314 899 L1328.4 899 L1328.4 913.2 L1325.4 913.2 L1325.4 902 L1314 902 Z" fill="#c8c8c8"/><rect x="1292.3" y="956.7" width="19" height="24" fill="none" stroke="#c8c8c8" stroke-width="2"/><rect x="1299.9" y="970" width="25" height="18.8" fill="#535353" stroke="#c8c8c8" stroke-width="2"/><rect x="1297.5" y="1042.8" width="24" height="23.8" fill="none" stroke="#c8c8c8" stroke-width="1.8"/><rect x="1294.6" y="1039.9" width="6" height="5.9" fill="#c8c8c8"/><rect x="1306.6" y="1039.9" width="6" height="5.9" fill="#c8c8c8"/><rect x="1318.6" y="1039.9" width="6" height="5.9" fill="#c8c8c8"/><rect x="1294.6" y="1051.8" width="6" height="5.9" fill="#c8c8c8"/><rect x="1318.6" y="1051.8" width="6" height="5.9" fill="#c8c8c8"/><rect x="1294.6" y="1063.6" width="6" height="5.9" fill="#c8c8c8"/><rect x="1306.6" y="1063.6" width="6" height="5.9" fill="#c8c8c8"/><rect x="1318.6" y="1063.6" width="6" height="5.9" fill="#c8c8c8"/><circle cx="1309.6" cy="1054.7" r="1.6" fill="#c8c8c8"/><rect x="1294.5" y="1092" width="1.8" height="36" fill="#c8c8c8"/><rect x="1298.8" y="1097" width="12.5" height="11.5" fill="#c8c8c8"/><rect x="1298.8" y="1113.3" width="25.5" height="9.5" fill="#c8c8c8"/><rect x="1294.7" y="1150.2" width="17.3" height="17.5" fill="#c8c8c8"/><rect x="1304.3" y="1160" width="20.2" height="20" fill="#c8c8c8"/><rect x="1303.2" y="1158.8" width="10" height="10" fill="none" stroke="#3b3b3b" stroke-width="1.2"/></svg>
<svg style="left:146px;top:194px" width="1088" height="964" viewBox="146 194 1088 964"><defs><filter id="bl" x="-5%" y="-5%" width="110%" height="110%"><feGaussianBlur stdDeviation="0.28"/></filter></defs><g filter="url(#bl)"><rect x="221.1" y="583.3" width="139.1" height="28" fill="#fff"/><rect x="225.00" y="590.20" width="3.19" height="1.7" fill="#111" fill-opacity="0.8"/><rect x="229.23" y="590.20" width="3.85" height="1.7" fill="#111" fill-opacity="0.8"/><rect x="234.16" y="590.20" width="5.13" height="1.7" fill="#111" fill-opacity="0.8"/><rect x="239.94" y="590.20" width="2.07" height="1.7" fill="#111" fill-opacity="0.8"/><rect x="243.27" y="590.20" width="3.30" height="1.7" fill="#111" fill-opacity="0.8"/><rect x="247.36" y="590.20" width="6.98" height="1.7" fill="#111" fill-opacity="0.8"/><rect x="255.31" y="590.20" width="6.18" height="1.7" fill="#111" fill-opacity="0.8"/><rect x="262.48" y="590.20" width="5.20" height="1.7" fill="#111" fill-opacity="0.8"/><rect x="268.39" y="590.20" width="5.17" height="1.7" fill="#111" fill-opacity="0.8"/><rect x="274.86" y="590.20" width="4.62" height="1.7" fill="#111" fill-opacity="0.8"/><rect x="280.67" y="590.20" width="4.33" height="1.7" fill="#111" fill-opacity="0.8"/><rect x="225.00" y="593.30" width="5.79" height="1.7" fill="#111" fill-opacity="0.8"/><rect x="231.86" y="593.30" width="3.51" height="1.7" fill="#111" fill-opacity="0.8"/><rect x="236.00" y="593.30" width="6.33" height="1.7" fill="#111" fill-opacity="0.8"/><rect x="243.30" y="593.30" width="5.59" height="1.7" fill="#111" fill-opacity="0.8"/><rect x="250.20" y="593.30" width="5.57" height="1.7" fill="#111" fill-opacity="0.8"/><rect x="257.11" y="593.30" width="3.97" height="1.7" fill="#111" fill-opacity="0.8"/><rect x="262.32" y="593.30" width="4.22" height="1.7" fill="#111" fill-opacity="0.8"/><rect x="267.89" y="593.30" width="6.39" height="1.7" fill="#111" fill-opacity="0.8"/><rect x="274.97" y="593.30" width="2.68" height="1.7" fill="#111" fill-opacity="0.8"/><rect x="278.42" y="593.30" width="6.83" height="1.7" fill="#111" fill-opacity="0.8"/><rect x="286.19" y="593.30" width="5.13" height="1.7" fill="#111" fill-opacity="0.8"/><rect x="292.17" y="593.30" width="4.54" height="1.7" fill="#111" fill-opacity="0.8"/><rect x="297.61" y="593.30" width="3.75" height="1.7" fill="#111" fill-opacity="0.8"/><rect x="302.44" y="593.30" width="4.92" height="1.7" fill="#111" fill-opacity="0.8"/><rect x="308.68" y="593.30" width="0.32" height="1.7" fill="#111" fill-opacity="0.8"/><rect x="225.00" y="600.80" width="6.28" height="1.7" fill="#111" fill-opacity="0.8"/><rect x="232.67" y="600.80" width="5.36" height="1.7" fill="#111" fill-opacity="0.8"/><rect x="238.76" y="600.80" width="6.30" height="1.7" fill="#111" fill-opacity="0.8"/><rect x="246.44" y="600.80" width="6.52" height="1.7" fill="#111" fill-opacity="0.8"/><rect x="254.02" y="600.80" width="5.57" height="1.7" fill="#111" fill-opacity="0.8"/><rect x="260.35" y="600.80" width="6.16" height="1.7" fill="#111" fill-opacity="0.8"/><rect x="267.57" y="600.80" width="3.42" height="1.7" fill="#111" fill-opacity="0.8"/><rect x="271.65" y="600.80" width="6.27" height="1.7" fill="#111" fill-opacity="0.8"/><rect x="279.31" y="600.80" width="2.44" height="1.7" fill="#111" fill-opacity="0.8"/><rect x="282.99" y="600.80" width="4.05" height="1.7" fill="#111" fill-opacity="0.8"/><rect x="287.76" y="600.80" width="3.47" height="1.7" fill="#111" fill-opacity="0.8"/><rect x="292.45" y="600.80" width="6.36" height="1.7" fill="#111" fill-opacity="0.8"/><rect x="299.45" y="600.80" width="5.07" height="1.7" fill="#111" fill-opacity="0.8"/><rect x="305.16" y="600.80" width="5.59" height="1.7" fill="#111" fill-opacity="0.8"/><rect x="311.61" y="600.80" width="6.40" height="1.7" fill="#111" fill-opacity="0.8"/><rect x="319.40" y="600.80" width="2.60" height="1.7" fill="#111" fill-opacity="0.8"/><rect x="1052.5" y="575.5" width="1.2" height="1.2" fill="#aaa"/><rect x="223.4" y="618.3" width="163.5" height="116.8" fill="#3e3e3e" fill-opacity="0.55"/><rect x="220.9" y="615.3" width="163.5" height="116.8" fill="#adadad"/><rect x="222.9" y="617.0999999999999" width="159.5" height="112.8" fill="#fff"/><rect x="223.4" y="617.9" width="158.5" height="7.4" fill="#000"/><rect x="225.4" y="620.5" width="16" height="2.4" fill="#fff" fill-opacity="0.9"/><rect x="223.4" y="723.8" width="158.5" height="4.8" fill="#000"/><rect x="225.90" y="725.5999999999999" width="11.22" height="1.2" fill="#fff" fill-opacity="0.75"/><rect x="238.12" y="725.5999999999999" width="5.56" height="1.2" fill="#fff" fill-opacity="0.75"/><rect x="244.69" y="725.5999999999999" width="5.75" height="1.2" fill="#fff" fill-opacity="0.75"/><rect x="251.43" y="725.5999999999999" width="6.04" height="1.2" fill="#fff" fill-opacity="0.75"/><rect x="258.47" y="725.5999999999999" width="7.42" height="1.2" fill="#fff" fill-opacity="0.75"/><rect x="266.90" y="725.5999999999999" width="8.39" height="1.2" fill="#fff" fill-opacity="0.75"/><rect x="276.29" y="725.5999999999999" width="10.81" height="1.2" fill="#fff" fill-opacity="0.75"/><rect x="288.10" y="725.5999999999999" width="5.59" height="1.2" fill="#fff" fill-opacity="0.75"/><rect x="294.69" y="725.5999999999999" width="12.87" height="1.2" fill="#fff" fill-opacity="0.75"/><rect x="308.56" y="725.5999999999999" width="7.33" height="1.2" fill="#fff" fill-opacity="0.75"/><rect x="316.89" y="725.5999999999999" width="7.24" height="1.2" fill="#fff" fill-opacity="0.75"/><rect x="325.13" y="725.5999999999999" width="5.13" height="1.2" fill="#fff" fill-opacity="0.75"/><rect x="331.26" y="725.5999999999999" width="9.43" height="1.2" fill="#fff" fill-opacity="0.75"/><rect x="341.69" y="725.5999999999999" width="10.31" height="1.2" fill="#fff" fill-opacity="0.75"/><rect x="352.99" y="725.5999999999999" width="5.27" height="1.2" fill="#fff" fill-opacity="0.75"/><rect x="359.27" y="725.5999999999999" width="10.74" height="1.2" fill="#fff" fill-opacity="0.75"/><rect x="371.01" y="725.5999999999999" width="7.39" height="1.2" fill="#fff" fill-opacity="0.75"/><rect x="223.9" y="625.90" width="157.5" height="0.8" fill="#b4b4b4"/><rect x="223.9" y="629.35" width="157.5" height="0.8" fill="#b4b4b4"/><rect x="223.9" y="632.80" width="157.5" height="0.8" fill="#b4b4b4"/><rect x="223.9" y="636.25" width="157.5" height="0.8" fill="#b4b4b4"/><rect x="223.9" y="639.70" width="157.5" height="0.8" fill="#b4b4b4"/><rect x="223.9" y="643.15" width="157.5" height="0.8" fill="#b4b4b4"/><rect x="223.9" y="646.60" width="157.5" height="0.8" fill="#b4b4b4"/><rect x="223.9" y="650.05" width="157.5" height="0.8" fill="#b4b4b4"/><rect x="225.90" y="626.90" width="3.59" height="1.3" fill="#222" fill-opacity="0.75"/><rect x="230.15" y="626.90" width="5.84" height="1.3" fill="#222" fill-opacity="0.75"/><rect x="237.39" y="626.90" width="5.59" height="1.3" fill="#222" fill-opacity="0.75"/><rect x="243.76" y="626.90" width="3.62" height="1.3" fill="#222" fill-opacity="0.75"/><rect x="248.58" y="626.90" width="1.85" height="1.3" fill="#222" fill-opacity="0.75"/><rect x="303.90" y="626.90" width="4.64" height="1.3" fill="#222" fill-opacity="0.75"/><rect x="309.29" y="626.90" width="2.52" height="1.3" fill="#222" fill-opacity="0.75"/><rect x="312.41" y="626.90" width="6.44" height="1.3" fill="#222" fill-opacity="0.75"/><rect x="320.11" y="626.90" width="3.99" height="1.3" fill="#222" fill-opacity="0.75"/><rect x="324.99" y="626.90" width="5.06" height="1.3" fill="#222" fill-opacity="0.75"/><rect x="331.04" y="626.90" width="3.39" height="1.3" fill="#222" fill-opacity="0.75"/><rect x="335.54" y="626.90" width="3.89" height="1.3" fill="#222" fill-opacity="0.75"/><rect x="340.64" y="626.90" width="1.12" height="1.3" fill="#222" fill-opacity="0.75"/><rect x="225.90" y="630.35" width="4.93" height="1.3" fill="#222" fill-opacity="0.75"/><rect x="231.85" y="630.35" width="5.92" height="1.3" fill="#222" fill-opacity="0.75"/><rect x="238.87" y="630.35" width="3.97" height="1.3" fill="#222" fill-opacity="0.75"/><rect x="244.19" y="630.35" width="2.32" height="1.3" fill="#222" fill-opacity="0.75"/><rect x="247.46" y="630.35" width="5.65" height="1.3" fill="#222" fill-opacity="0.75"/><rect x="303.90" y="630.35" width="6.51" height="1.3" fill="#222" fill-opacity="0.75"/><rect x="311.23" y="630.35" width="3.55" height="1.3" fill="#222" fill-opacity="0.75"/><rect x="315.95" y="630.35" width="4.98" height="1.3" fill="#222" fill-opacity="0.75"/><rect x="225.90" y="633.80" width="2.90" height="1.3" fill="#222" fill-opacity="0.75"/><rect x="229.40" y="633.80" width="3.55" height="1.3" fill="#222" fill-opacity="0.75"/><rect x="233.76" y="633.80" width="3.62" height="1.3" fill="#222" fill-opacity="0.75"/><rect x="238.45" y="633.80" width="4.99" height="1.3" fill="#222" fill-opacity="0.75"/><rect x="244.50" y="633.80" width="6.28" height="1.3" fill="#222" fill-opacity="0.75"/><rect x="251.57" y="633.80" width="3.53" height="1.3" fill="#222" fill-opacity="0.75"/><rect x="255.98" y="633.80" width="3.63" height="1.3" fill="#222" fill-opacity="0.75"/><rect x="303.90" y="633.80" width="6.81" height="1.3" fill="#222" fill-opacity="0.75"/><rect x="311.31" y="633.80" width="5.99" height="1.3" fill="#222" fill-opacity="0.75"/><rect x="318.64" y="633.80" width="4.42" height="1.3" fill="#222" fill-opacity="0.75"/><rect x="323.88" y="633.80" width="2.28" height="1.3" fill="#222" fill-opacity="0.75"/><rect x="327.27" y="633.80" width="2.69" height="1.3" fill="#222" fill-opacity="0.75"/><rect x="225.90" y="637.25" width="3.54" height="1.3" fill="#222" fill-opacity="0.75"/><rect x="230.64" y="637.25" width="3.40" height="1.3" fill="#222" fill-opacity="0.75"/><rect x="235.25" y="637.25" width="4.55" height="1.3" fill="#222" fill-opacity="0.75"/><rect x="241.17" y="637.25" width="4.44" height="1.3" fill="#222" fill-opacity="0.75"/><rect x="246.83" y="637.25" width="1.93" height="1.3" fill="#222" fill-opacity="0.75"/><rect x="303.90" y="637.25" width="5.54" height="1.3" fill="#222" fill-opacity="0.75"/><rect x="310.78" y="637.25" width="6.24" height="1.3" fill="#222" fill-opacity="0.75"/><rect x="317.96" y="637.25" width="5.11" height="1.3" fill="#222" fill-opacity="0.75"/><rect x="324.07" y="637.25" width="3.32" height="1.3" fill="#222" fill-opacity="0.75"/><rect x="328.59" y="637.25" width="4.54" height="1.3" fill="#222" fill-opacity="0.75"/><rect x="225.90" y="640.70" width="4.62" height="1.3" fill="#222" fill-opacity="0.75"/><rect x="231.81" y="640.70" width="4.00" height="1.3" fill="#222" fill-opacity="0.75"/><rect x="236.42" y="640.70" width="3.71" height="1.3" fill="#222" fill-opacity="0.75"/><rect x="241.28" y="640.70" width="4.54" height="1.3" fill="#222" fill-opacity="0.75"/><rect x="246.59" y="640.70" width="3.17" height="1.3" fill="#222" fill-opacity="0.75"/><rect x="250.61" y="640.70" width="2.14" height="1.3" fill="#222" fill-opacity="0.75"/><rect x="254.11" y="640.70" width="2.47" height="1.3" fill="#222" fill-opacity="0.75"/><rect x="303.90" y="640.70" width="6.87" height="1.3" fill="#222" fill-opacity="0.75"/><rect x="312.04" y="640.70" width="2.26" height="1.3" fill="#222" fill-opacity="0.75"/><rect x="315.63" y="640.70" width="5.50" height="1.3" fill="#222" fill-opacity="0.75"/><rect x="322.31" y="640.70" width="3.42" height="1.3" fill="#222" fill-opacity="0.75"/><rect x="326.67" y="640.70" width="0.09" height="1.3" fill="#222" fill-opacity="0.75"/><rect x="225.90" y="644.15" width="2.57" height="1.3" fill="#222" fill-opacity="0.75"/><rect x="229.60" y="644.15" width="3.45" height="1.3" fill="#222" fill-opacity="0.75"/><rect x="234.39" y="644.15" width="6.73" height="1.3" fill="#222" fill-opacity="0.75"/><rect x="241.94" y="644.15" width="2.45" height="1.3" fill="#222" fill-opacity="0.75"/><rect x="245.49" y="644.15" width="4.25" height="1.3" fill="#222" fill-opacity="0.75"/><rect x="250.89" y="644.15" width="0.54" height="1.3" fill="#222" fill-opacity="0.75"/><rect x="303.90" y="644.15" width="3.41" height="1.3" fill="#222" fill-opacity="0.75"/><rect x="308.71" y="644.15" width="5.16" height="1.3" fill="#222" fill-opacity="0.75"/><rect x="314.81" y="644.15" width="4.37" height="1.3" fill="#222" fill-opacity="0.75"/><rect x="320.58" y="644.15" width="4.71" height="1.3" fill="#222" fill-opacity="0.75"/><rect x="326.41" y="644.15" width="5.86" height="1.3" fill="#222" fill-opacity="0.75"/><rect x="333.32" y="644.15" width="3.78" height="1.3" fill="#222" fill-opacity="0.75"/><rect x="337.98" y="644.15" width="4.32" height="1.3" fill="#222" fill-opacity="0.75"/><rect x="343.46" y="644.15" width="3.14" height="1.3" fill="#222" fill-opacity="0.75"/><rect x="347.45" y="644.15" width="3.10" height="1.3" fill="#222" fill-opacity="0.75"/><rect x="351.36" y="644.15" width="4.01" height="1.3" fill="#222" fill-opacity="0.75"/><rect x="356.05" y="644.15" width="6.67" height="1.3" fill="#222" fill-opacity="0.75"/><rect x="364.06" y="644.15" width="6.63" height="1.3" fill="#222" fill-opacity="0.75"/><rect x="371.72" y="644.15" width="3.94" height="1.3" fill="#222" fill-opacity="0.75"/><rect x="376.43" y="644.15" width="2.43" height="1.3" fill="#222" fill-opacity="0.75"/><rect x="225.90" y="647.60" width="6.41" height="1.3" fill="#222" fill-opacity="0.75"/><rect x="233.26" y="647.60" width="6.72" height="1.3" fill="#222" fill-opacity="0.75"/><rect x="240.88" y="647.60" width="5.33" height="1.3" fill="#222" fill-opacity="0.75"/><rect x="246.88" y="647.60" width="3.38" height="1.3" fill="#222" fill-opacity="0.75"/><rect x="303.90" y="647.60" width="4.27" height="1.3" fill="#222" fill-opacity="0.75"/><rect x="309.31" y="647.60" width="4.48" height="1.3" fill="#222" fill-opacity="0.75"/><rect x="314.44" y="647.60" width="3.19" height="1.3" fill="#222" fill-opacity="0.75"/><rect x="318.99" y="647.60" width="4.11" height="1.3" fill="#222" fill-opacity="0.75"/><rect x="323.96" y="647.60" width="5.54" height="1.3" fill="#222" fill-opacity="0.75"/><rect x="330.39" y="647.60" width="4.95" height="1.3" fill="#222" fill-opacity="0.75"/><rect x="300.9" y="625.9" width="0.6" height="24" fill="#999"/><path d="M250.72 662.87 L261.08 662.87 C264.04 664.61 265.52 668.09 269.22 670.70 C272.55 673.75 273.29 681.58 274.03 697.67 L274.40 702.46 L273.66 704.41 L270.33 704.41 L269.22 701.59 L268.11 701.15 L268.11 705.28 L243.69 705.28 L243.69 701.15 L242.58 701.59 L241.47 704.41 L238.14 704.41 L237.40 702.46 L237.77 697.67 C238.51 681.58 239.25 673.75 242.58 670.70 C246.28 668.09 247.76 664.61 250.72 662.87 Z" fill="#6f8fd6" stroke="#3d4a78" stroke-width="0.7" stroke-linejoin="round"/><rect x="243.88" y="701.37" width="24.05" height="3.70" fill="#6482c8"/><path d="M243.69 673.31 C244.80 685.92 242.95 694.62 243.69 700.72 M268.11 673.31 C267.00 685.92 268.85 694.62 268.11 700.72" fill="none" stroke="#3d4a78" stroke-width="0.35" stroke-opacity="0.6"/><path d="M251 663 L256 667 L261 663 L259 661 L253 661 Z" fill="#1b1d52"/><rect x="255.7" y="665" width="0.7" height="39" fill="#3d4a78"/><path d="M292.30 662.87 L302.50 662.87 C305.41 664.61 306.86 668.09 310.50 670.70 C313.78 673.75 314.51 681.58 315.24 697.67 L315.60 702.46 L314.87 704.41 L311.60 704.41 L310.50 701.59 L309.41 701.15 L309.41 705.28 L285.39 705.28 L285.39 701.15 L284.30 701.59 L283.20 704.41 L279.93 704.41 L279.20 702.46 L279.56 697.67 C280.29 681.58 281.02 673.75 284.30 670.70 C287.94 668.09 289.39 664.61 292.30 662.87 Z" fill="#6f8fd6" stroke="#3d4a78" stroke-width="0.7" stroke-linejoin="round"/><rect x="285.57" y="701.37" width="23.66" height="3.70" fill="#6482c8"/><path d="M285.39 673.31 C286.48 685.92 284.66 694.62 285.39 700.72 M309.41 673.31 C308.32 685.92 310.14 694.62 309.41 700.72" fill="none" stroke="#3d4a78" stroke-width="0.35" stroke-opacity="0.6"/><circle cx="297" cy="681.5" r="7.2" fill="#2a3570"/><circle cx="297" cy="681.5" r="5" fill="#4a6ab0"/><rect x="289" y="679.8" width="11" height="2.2" fill="#9bd83a"/><rect x="290" y="672.5" width="14" height="1" fill="#9bd83a" fill-opacity="0.7"/><path d="M343.90 670.86 C340.70 660.69 344.70 653.20 352.70 653.20 C360.70 653.20 364.70 660.69 361.50 670.86 L367.10 674.60 C370.70 677.81 371.50 685.30 372.30 698.14 L372.70 702.96 L371.90 705.36 L368.30 705.36 L367.10 701.88 L365.90 701.35 L365.90 706.43 L339.50 706.43 L339.50 701.35 L338.30 701.88 L337.10 705.36 L333.50 705.36 L332.70 702.96 L333.10 698.14 C333.90 685.30 334.70 677.81 338.30 674.60 Z" fill="#6f8fd6" stroke="#3d4a78" stroke-width="0.7" stroke-linejoin="round"/><rect x="339.70" y="701.62" width="26.00" height="4.55" fill="#6482c8"/><path d="M339.50 674.60 C340.70 682.62 338.70 693.33 339.50 700.82 M365.90 674.60 C364.70 682.62 366.70 693.33 365.90 700.82" fill="none" stroke="#3d4a78" stroke-width="0.35" stroke-opacity="0.6"/><ellipse cx="353.2" cy="664.5" rx="7.5" ry="7.2" fill="#1b1d52"/><rect x="350.4" y="669" width="5.8" height="36.5" fill="#1b1d52"/><rect x="252" y="659" width="8" height="1.3" fill="#111"/><rect x="293" y="659" width="8" height="1.3" fill="#111"/><rect x="349" y="651" width="8" height="1.3" fill="#111"/><rect x="223.9" y="709" width="157.5" height="0.8" fill="#bbb"/><rect x="224.90" y="711.50" width="4.89" height="1.2" fill="#111" fill-opacity="0.85"/><rect x="230.69" y="711.50" width="4.08" height="1.2" fill="#111" fill-opacity="0.85"/><rect x="235.82" y="711.50" width="6.98" height="1.2" fill="#111" fill-opacity="0.85"/><rect x="243.81" y="711.50" width="6.77" height="1.2" fill="#111" fill-opacity="0.85"/><rect x="251.77" y="711.50" width="4.26" height="1.2" fill="#111" fill-opacity="0.85"/><rect x="256.82" y="711.50" width="6.83" height="1.2" fill="#111" fill-opacity="0.85"/><rect x="264.59" y="711.50" width="3.24" height="1.2" fill="#111" fill-opacity="0.85"/><rect x="268.73" y="711.50" width="1.17" height="1.2" fill="#111" fill-opacity="0.85"/><rect x="224.90" y="713.30" width="4.55" height="1.2" fill="#111" fill-opacity="0.85"/><rect x="230.67" y="713.30" width="6.45" height="1.2" fill="#111" fill-opacity="0.85"/><rect x="238.18" y="713.30" width="6.03" height="1.2" fill="#111" fill-opacity="0.85"/><rect x="245.44" y="713.30" width="3.67" height="1.2" fill="#111" fill-opacity="0.85"/><rect x="250.34" y="713.30" width="4.16" height="1.2" fill="#111" fill-opacity="0.85"/><rect x="255.73" y="713.30" width="4.17" height="1.2" fill="#111" fill-opacity="0.85"/><rect x="224.90" y="715.00" width="6.22" height="1.2" fill="#111" fill-opacity="0.85"/><rect x="232.22" y="715.00" width="4.48" height="1.2" fill="#111" fill-opacity="0.85"/><rect x="237.90" y="715.00" width="2.30" height="1.2" fill="#111" fill-opacity="0.85"/><rect x="241.46" y="715.00" width="5.66" height="1.2" fill="#111" fill-opacity="0.85"/><rect x="247.98" y="715.00" width="3.86" height="1.2" fill="#111" fill-opacity="0.85"/><rect x="252.87" y="715.00" width="4.94" height="1.2" fill="#111" fill-opacity="0.85"/><rect x="258.90" y="715.00" width="6.44" height="1.2" fill="#111" fill-opacity="0.85"/><rect x="266.68" y="715.00" width="6.02" height="1.2" fill="#111" fill-opacity="0.85"/><rect x="274.02" y="715.00" width="2.88" height="1.2" fill="#111" fill-opacity="0.85"/><rect x="224.90" y="717.50" width="3.61" height="1.2" fill="#111" fill-opacity="0.85"/><rect x="229.33" y="717.50" width="2.31" height="1.2" fill="#111" fill-opacity="0.85"/><rect x="232.99" y="717.50" width="4.14" height="1.2" fill="#111" fill-opacity="0.85"/><rect x="237.80" y="717.50" width="2.90" height="1.2" fill="#111" fill-opacity="0.85"/><rect x="242.04" y="717.50" width="3.34" height="1.2" fill="#111" fill-opacity="0.85"/><rect x="246.01" y="717.50" width="6.12" height="1.2" fill="#111" fill-opacity="0.85"/><rect x="253.23" y="717.50" width="1.67" height="1.2" fill="#111" fill-opacity="0.85"/><rect x="224.90" y="719.50" width="2.24" height="1.2" fill="#111" fill-opacity="0.85"/><rect x="227.88" y="719.50" width="3.47" height="1.2" fill="#111" fill-opacity="0.85"/><rect x="232.47" y="719.50" width="3.05" height="1.2" fill="#111" fill-opacity="0.85"/><rect x="236.33" y="719.50" width="5.30" height="1.2" fill="#111" fill-opacity="0.85"/><rect x="242.38" y="719.50" width="3.55" height="1.2" fill="#111" fill-opacity="0.85"/><rect x="246.57" y="719.50" width="2.18" height="1.2" fill="#111" fill-opacity="0.85"/><rect x="249.73" y="719.50" width="2.40" height="1.2" fill="#111" fill-opacity="0.85"/><rect x="224.90" y="721.00" width="6.95" height="1.2" fill="#111" fill-opacity="0.85"/><rect x="232.72" y="721.00" width="5.53" height="1.2" fill="#111" fill-opacity="0.85"/><rect x="239.40" y="721.00" width="5.06" height="1.2" fill="#111" fill-opacity="0.85"/><rect x="245.51" y="721.00" width="2.84" height="1.2" fill="#111" fill-opacity="0.85"/><rect x="249.05" y="721.00" width="3.52" height="1.2" fill="#111" fill-opacity="0.85"/><rect x="253.25" y="721.00" width="4.61" height="1.2" fill="#111" fill-opacity="0.85"/><rect x="258.46" y="721.00" width="0.44" height="1.2" fill="#111" fill-opacity="0.85"/><rect x="313" y="713.2" width="8.5" height="6.4" fill="#6f8fd6" stroke="#ccc" stroke-width="0.3"/><rect x="313" y="720.5" width="4.5" height="1" fill="#222"/><rect x="328.6" y="713.2" width="8.199999999999989" height="6.4" fill="#9ad431" stroke="#ccc" stroke-width="0.3"/><rect x="328.6" y="720.5" width="4.5" height="1" fill="#222"/><rect x="338.6" y="713.2" width="6.399999999999977" height="6.4" fill="#fff" stroke="#ccc" stroke-width="0.3"/><rect x="338.6" y="720.5" width="4.5" height="1" fill="#222"/><rect x="347.4" y="713.2" width="8.200000000000045" height="6.4" fill="#1b1d52" stroke="#ccc" stroke-width="0.3"/><rect x="347.4" y="720.5" width="4.5" height="1" fill="#222"/><rect x="363.3" y="713.2" width="7.699999999999989" height="6.4" fill="#1b1d52" stroke="#ccc" stroke-width="0.3"/><rect x="363.3" y="720.5" width="4.5" height="1" fill="#222"/><rect x="373" y="713.2" width="8" height="6.4" fill="#050505" stroke="#ccc" stroke-width="0.3"/><rect x="373" y="720.5" width="4.5" height="1" fill="#222"/><rect x="313" y="711.3" width="6" height="1" fill="#222"/><rect x="328.6" y="711.3" width="6" height="1" fill="#222"/><rect x="363.3" y="711.3" width="6" height="1" fill="#222"/><rect x="390.0" y="618.3" width="163.5" height="116.8" fill="#3e3e3e" fill-opacity="0.55"/><rect x="387.5" y="615.3" width="163.5" height="116.8" fill="#adadad"/><rect x="389.5" y="617.0999999999999" width="159.5" height="112.8" fill="#fff"/><rect x="390.0" y="617.9" width="158.5" height="7.4" fill="#000"/><rect x="392.0" y="620.5" width="16" height="2.4" fill="#fff" fill-opacity="0.9"/><rect x="390.0" y="723.8" width="158.5" height="4.8" fill="#000"/><rect x="392.50" y="725.5999999999999" width="7.84" height="1.2" fill="#fff" fill-opacity="0.75"/><rect x="401.34" y="725.5999999999999" width="3.44" height="1.2" fill="#fff" fill-opacity="0.75"/><rect x="405.78" y="725.5999999999999" width="11.65" height="1.2" fill="#fff" fill-opacity="0.75"/><rect x="418.43" y="725.5999999999999" width="11.74" height="1.2" fill="#fff" fill-opacity="0.75"/><rect x="431.17" y="725.5999999999999" width="5.11" height="1.2" fill="#fff" fill-opacity="0.75"/><rect x="437.28" y="725.5999999999999" width="5.94" height="1.2" fill="#fff" fill-opacity="0.75"/><rect x="444.22" y="725.5999999999999" width="12.27" height="1.2" fill="#fff" fill-opacity="0.75"/><rect x="457.49" y="725.5999999999999" width="4.20" height="1.2" fill="#fff" fill-opacity="0.75"/><rect x="462.70" y="725.5999999999999" width="11.00" height="1.2" fill="#fff" fill-opacity="0.75"/><rect x="474.70" y="725.5999999999999" width="3.96" height="1.2" fill="#fff" fill-opacity="0.75"/><rect x="479.65" y="725.5999999999999" width="5.70" height="1.2" fill="#fff" fill-opacity="0.75"/><rect x="486.36" y="725.5999999999999" width="7.58" height="1.2" fill="#fff" fill-opacity="0.75"/><rect x="494.94" y="725.5999999999999" width="6.24" height="1.2" fill="#fff" fill-opacity="0.75"/><rect x="502.18" y="725.5999999999999" width="12.66" height="1.2" fill="#fff" fill-opacity="0.75"/><rect x="515.84" y="725.5999999999999" width="10.91" height="1.2" fill="#fff" fill-opacity="0.75"/><rect x="527.75" y="725.5999999999999" width="12.44" height="1.2" fill="#fff" fill-opacity="0.75"/><rect x="541.19" y="725.5999999999999" width="3.81" height="1.2" fill="#fff" fill-opacity="0.75"/><rect x="390.5" y="629.0999999999999" width="157" height="0.8" fill="#c8c8c8"/><rect x="391.50" y="626.60" width="2.72" height="1.2" fill="#222" fill-opacity="0.8"/><rect x="395.21" y="626.60" width="4.60" height="1.2" fill="#222" fill-opacity="0.8"/><rect x="400.80" y="626.60" width="2.48" height="1.2" fill="#222" fill-opacity="0.8"/><rect x="404.27" y="626.60" width="6.86" height="1.2" fill="#222" fill-opacity="0.8"/><rect x="411.83" y="626.60" width="4.97" height="1.2" fill="#222" fill-opacity="0.8"/><path d="M426.56 653.51 L436.94 653.51 C439.91 655.32 441.40 658.94 445.11 661.66 C448.44 664.83 449.19 672.99 449.93 689.75 L450.30 694.73 L449.56 696.77 L446.22 696.77 L445.11 693.82 L443.99 693.37 L443.99 697.67 L419.51 697.67 L419.51 693.37 L418.39 693.82 L417.28 696.77 L413.94 696.77 L413.20 694.73 L413.57 689.75 C414.31 672.99 415.06 664.83 418.39 661.66 C422.10 658.94 423.59 655.32 426.56 653.51 Z" fill="#fff" stroke="#111" stroke-width="1.1" stroke-linejoin="round"/><rect x="419.69" y="693.60" width="24.12" height="3.85" fill="#c4c4c4"/><path d="M419.51 664.38 C420.62 677.51 418.76 686.58 419.51 692.92 M443.99 664.38 C442.88 677.51 444.74 686.58 443.99 692.92" fill="none" stroke="#111" stroke-width="0.55" stroke-opacity="0.6"/><path d="M465.14 653.51 L475.36 653.51 C478.28 655.32 479.74 658.94 483.39 661.66 C486.68 664.83 487.40 672.99 488.13 689.75 L488.50 694.73 L487.77 696.77 L484.49 696.77 L483.39 693.82 L482.30 693.37 L482.30 697.67 L458.20 697.67 L458.20 693.37 L457.11 693.82 L456.01 696.77 L452.73 696.77 L452.00 694.73 L452.37 689.75 C453.10 672.99 453.82 664.83 457.11 661.66 C460.76 658.94 462.22 655.32 465.14 653.51 Z" fill="#fff" stroke="#111" stroke-width="1.1" stroke-linejoin="round"/><rect x="458.39" y="693.60" width="23.73" height="3.85" fill="#c4c4c4"/><path d="M458.20 664.38 C459.30 677.51 457.48 686.58 458.20 692.92 M482.30 664.38 C481.20 677.51 483.02 686.58 482.30 692.92" fill="none" stroke="#111" stroke-width="0.55" stroke-opacity="0.6"/><path d="M517.66 661.99 C514.56 651.63 518.44 644.00 526.20 644.00 C533.96 644.00 537.84 651.63 534.74 661.99 L540.17 665.80 C543.66 669.07 544.44 676.70 545.21 689.78 L545.60 694.68 L544.82 697.14 L541.33 697.14 L540.17 693.60 L539.00 693.05 L539.00 698.23 L513.40 698.23 L513.40 693.05 L512.23 693.60 L511.07 697.14 L507.58 697.14 L506.80 694.68 L507.19 689.78 C507.96 676.70 508.74 669.07 512.23 665.80 Z" fill="#fff" stroke="#111" stroke-width="1.1" stroke-linejoin="round"/><rect x="513.59" y="693.32" width="25.22" height="4.63" fill="#c4c4c4"/><path d="M513.40 665.80 C514.56 673.98 512.62 684.88 513.40 692.50 M539.00 665.80 C537.84 673.98 539.78 684.88 539.00 692.50" fill="none" stroke="#111" stroke-width="0.55" stroke-opacity="0.6"/><path d="M427 654 L432 662 L437 654 Z" fill="#bbb"/><rect x="431.6" y="660" width="0.7" height="37" fill="#333"/><ellipse cx="526.2" cy="657" rx="6.5" ry="7.5" fill="#c4c4c4"/><rect x="522.7" y="660" width="7" height="37.5" fill="#c4c4c4"/><circle cx="402" cy="639.6" r="8.8" fill="#fff" stroke="#222" stroke-width="0.6" stroke-dasharray="1.6 0.8"/><circle cx="402.4" cy="713.2" r="8.8" fill="#fff" stroke="#222" stroke-width="0.6" stroke-dasharray="1.6 0.8"/><circle cx="467.9" cy="714.4" r="6.3" fill="#fff" stroke="#222" stroke-width="0.6" stroke-dasharray="1.6 0.8"/><circle cx="498" cy="640.2" r="8.3" fill="#fff" stroke="#222" stroke-width="0.6" stroke-dasharray="1.6 0.8"/><circle cx="498.5" cy="713.8" r="9" fill="#fff" stroke="#222" stroke-width="0.6" stroke-dasharray="1.6 0.8"/><path d="M399 632 L402 648 M405 632 L402 648 M396 636 L408 636" stroke="#333" stroke-width="0.7" fill="none"/><rect x="400" y="706" width="3" height="14" rx="1.5" transform="rotate(20 401.5 713)" fill="none" stroke="#333" stroke-width="0.6"/><rect x="492.5" y="636" width="11" height="2.5" fill="#999"/><rect x="494.5" y="640" width="7" height="5" fill="none" stroke="#555" stroke-width="0.5"/><rect x="496.5" y="706" width="0.8" height="16" fill="#222"/><rect x="500" y="709" width="4" height="9" fill="none" stroke="#999" stroke-width="0.4"/><rect x="466.5" y="710" width="0.6" height="9" fill="#333"/><rect x="468.5" y="710" width="0.6" height="9" fill="#333"/><rect x="393.00" y="655.50" width="4.26" height="1.1" fill="#222" fill-opacity="0.85"/><rect x="398.31" y="655.50" width="6.62" height="1.1" fill="#222" fill-opacity="0.85"/><rect x="405.90" y="655.50" width="4.54" height="1.1" fill="#222" fill-opacity="0.85"/><rect x="411.51" y="655.50" width="2.92" height="1.1" fill="#222" fill-opacity="0.85"/><rect x="415.45" y="655.50" width="0.55" height="1.1" fill="#222" fill-opacity="0.85"/><rect x="393.00" y="662.50" width="2.47" height="1.1" fill="#222" fill-opacity="0.85"/><rect x="396.31" y="662.50" width="2.45" height="1.1" fill="#222" fill-opacity="0.85"/><rect x="400.01" y="662.50" width="5.47" height="1.1" fill="#222" fill-opacity="0.85"/><rect x="406.12" y="662.50" width="2.88" height="1.1" fill="#222" fill-opacity="0.85"/><rect x="393.00" y="664.50" width="5.27" height="1.1" fill="#222" fill-opacity="0.85"/><rect x="399.36" y="664.50" width="2.79" height="1.1" fill="#222" fill-opacity="0.85"/><rect x="402.76" y="664.50" width="2.24" height="1.1" fill="#222" fill-opacity="0.85"/><rect x="393.00" y="671.00" width="2.95" height="1.1" fill="#222" fill-opacity="0.85"/><rect x="396.74" y="671.00" width="2.15" height="1.1" fill="#222" fill-opacity="0.85"/><rect x="399.87" y="671.00" width="4.20" height="1.1" fill="#222" fill-opacity="0.85"/><rect x="405.34" y="671.00" width="4.60" height="1.1" fill="#222" fill-opacity="0.85"/><rect x="411.05" y="671.00" width="1.95" height="1.1" fill="#222" fill-opacity="0.85"/><rect x="393.00" y="682.00" width="4.29" height="1.1" fill="#222" fill-opacity="0.85"/><rect x="398.11" y="682.00" width="6.99" height="1.1" fill="#222" fill-opacity="0.85"/><rect x="406.49" y="682.00" width="0.51" height="1.1" fill="#222" fill-opacity="0.85"/><rect x="393.00" y="684.00" width="3.58" height="1.1" fill="#222" fill-opacity="0.85"/><rect x="397.36" y="684.00" width="3.45" height="1.1" fill="#222" fill-opacity="0.85"/><rect x="401.46" y="684.00" width="5.83" height="1.1" fill="#222" fill-opacity="0.85"/><rect x="408.21" y="684.00" width="4.79" height="1.1" fill="#222" fill-opacity="0.85"/><rect x="393.00" y="692.00" width="6.79" height="1.1" fill="#222" fill-opacity="0.85"/><rect x="401.07" y="692.00" width="2.00" height="1.1" fill="#222" fill-opacity="0.85"/><rect x="403.84" y="692.00" width="5.16" height="1.1" fill="#222" fill-opacity="0.85"/><rect x="393.00" y="694.00" width="6.90" height="1.1" fill="#222" fill-opacity="0.85"/><rect x="400.82" y="694.00" width="2.18" height="1.1" fill="#222" fill-opacity="0.85"/><rect x="393.00" y="702.00" width="5.89" height="1.1" fill="#222" fill-opacity="0.85"/><rect x="399.71" y="702.00" width="2.44" height="1.1" fill="#222" fill-opacity="0.85"/><rect x="403.01" y="702.00" width="6.82" height="1.1" fill="#222" fill-opacity="0.85"/><rect x="411.04" y="702.00" width="2.59" height="1.1" fill="#222" fill-opacity="0.85"/><rect x="414.42" y="702.00" width="0.58" height="1.1" fill="#222" fill-opacity="0.85"/><rect x="414.00" y="709.50" width="5.99" height="1.1" fill="#222" fill-opacity="0.85"/><rect x="420.73" y="709.50" width="4.80" height="1.1" fill="#222" fill-opacity="0.85"/><rect x="426.48" y="709.50" width="1.52" height="1.1" fill="#222" fill-opacity="0.85"/><rect x="436.00" y="707.00" width="2.65" height="1.1" fill="#222" fill-opacity="0.85"/><rect x="439.77" y="707.00" width="2.58" height="1.1" fill="#222" fill-opacity="0.85"/><rect x="443.29" y="707.00" width="3.06" height="1.1" fill="#222" fill-opacity="0.85"/><rect x="447.17" y="707.00" width="6.83" height="1.1" fill="#222" fill-opacity="0.85"/><rect x="458.00" y="707.00" width="3.52" height="1.1" fill="#222" fill-opacity="0.85"/><rect x="462.83" y="707.00" width="3.05" height="1.1" fill="#222" fill-opacity="0.85"/><rect x="466.80" y="707.00" width="6.27" height="1.1" fill="#222" fill-opacity="0.85"/><rect x="474.18" y="707.00" width="1.82" height="1.1" fill="#222" fill-opacity="0.85"/><rect x="486.00" y="705.50" width="3.07" height="1.1" fill="#222" fill-opacity="0.85"/><rect x="489.87" y="705.50" width="5.86" height="1.1" fill="#222" fill-opacity="0.85"/><rect x="496.60" y="705.50" width="3.48" height="1.1" fill="#222" fill-opacity="0.85"/><rect x="500.74" y="705.50" width="2.45" height="1.1" fill="#222" fill-opacity="0.85"/><rect x="504.26" y="705.50" width="3.22" height="1.1" fill="#222" fill-opacity="0.85"/><rect x="446.00" y="648.50" width="3.86" height="1.1" fill="#222" fill-opacity="0.85"/><rect x="450.82" y="648.50" width="6.80" height="1.1" fill="#222" fill-opacity="0.85"/><rect x="458.60" y="648.50" width="4.87" height="1.1" fill="#222" fill-opacity="0.85"/><rect x="491.00" y="650.00" width="2.91" height="1.1" fill="#222" fill-opacity="0.85"/><rect x="494.64" y="650.00" width="6.54" height="1.1" fill="#222" fill-opacity="0.85"/><rect x="502.43" y="650.00" width="2.57" height="1.1" fill="#222" fill-opacity="0.85"/><rect x="491.00" y="661.00" width="5.70" height="1.1" fill="#222" fill-opacity="0.85"/><rect x="498.05" y="661.00" width="2.98" height="1.1" fill="#222" fill-opacity="0.85"/><rect x="502.39" y="661.00" width="2.61" height="1.1" fill="#222" fill-opacity="0.85"/><rect x="489.00" y="674.00" width="4.11" height="1.1" fill="#222" fill-opacity="0.85"/><rect x="493.79" y="674.00" width="2.19" height="1.1" fill="#222" fill-opacity="0.85"/><rect x="497.35" y="674.00" width="3.19" height="1.1" fill="#222" fill-opacity="0.85"/><rect x="501.71" y="674.00" width="3.28" height="1.1" fill="#222" fill-opacity="0.85"/><rect x="392.00" y="649.50" width="4.98" height="1.1" fill="#222" fill-opacity="0.85"/><rect x="397.82" y="649.50" width="2.88" height="1.1" fill="#222" fill-opacity="0.85"/><rect x="401.87" y="649.50" width="2.13" height="1.1" fill="#222" fill-opacity="0.85"/><rect x="490.00" y="652.00" width="4.80" height="1.1" fill="#222" fill-opacity="0.85"/><rect x="496.08" y="652.00" width="5.07" height="1.1" fill="#222" fill-opacity="0.85"/><rect x="501.97" y="652.00" width="0.03" height="1.1" fill="#222" fill-opacity="0.85"/><rect x="406.00" y="726.00" width="1.00" height="1.1" fill="#222" fill-opacity="0.85"/><path d="M416 656 L425 656" stroke="#f09ac0" stroke-width="0.6"/><path d="M414 663 L425 663" stroke="#f09ac0" stroke-width="0.6"/><path d="M417 671 L425 671" stroke="#f09ac0" stroke-width="0.6"/><path d="M411 690 L425 690" stroke="#f09ac0" stroke-width="0.6"/><path d="M425 656 L425 662" stroke="#f09ac0" stroke-width="0.6"/><path d="M452 649 L452 658" stroke="#f09ac0" stroke-width="0.6"/><path d="M452 658 L440 658" stroke="#f09ac0" stroke-width="0.6"/><path d="M503 651 L512 651" stroke="#f09ac0" stroke-width="0.6"/><path d="M503 661 L512 661" stroke="#f09ac0" stroke-width="0.6"/><path d="M503 675 L512 675" stroke="#f09ac0" stroke-width="0.6"/><path d="M498 684 L498 697" stroke="#f09ac0" stroke-width="0.6"/><path d="M498 684 L510 684" stroke="#f09ac0" stroke-width="0.6"/><path d="M431 706 L431 710" stroke="#f09ac0" stroke-width="0.6"/><path d="M445 690 L445 705" stroke="#f09ac0" stroke-width="0.6"/><path d="M466 690 L466 706" stroke="#f09ac0" stroke-width="0.6"/><path d="M471 690 L466 690" stroke="#f09ac0" stroke-width="0.6"/><path d="M423 687 L423 704" stroke="#f09ac0" stroke-width="0.6"/><path d="M418 702 L423 702" stroke="#f09ac0" stroke-width="0.6"/><circle cx="425" cy="680" r="1" fill="#f04a80"/><circle cx="424" cy="684" r="1" fill="#f07030"/><circle cx="423" cy="688" r="0.8" fill="#f04a80"/><rect x="428.0" y="650.5" width="10" height="1.3" fill="#111"/><rect x="466.0" y="650.5" width="8" height="1.3" fill="#111"/><rect x="524.0" y="641" width="8" height="1.3" fill="#111"/><rect x="557.1" y="618.3" width="163.5" height="116.8" fill="#3e3e3e" fill-opacity="0.55"/><rect x="554.6" y="615.3" width="163.5" height="116.8" fill="#adadad"/><rect x="556.6" y="617.0999999999999" width="159.5" height="112.8" fill="#fff"/><rect x="557.1" y="617.9" width="158.5" height="7.4" fill="#000"/><rect x="559.1" y="620.5" width="16" height="2.4" fill="#fff" fill-opacity="0.9"/><rect x="557.1" y="723.8" width="158.5" height="4.8" fill="#000"/><rect x="559.60" y="725.5999999999999" width="8.67" height="1.2" fill="#fff" fill-opacity="0.75"/><rect x="569.27" y="725.5999999999999" width="4.90" height="1.2" fill="#fff" fill-opacity="0.75"/><rect x="575.17" y="725.5999999999999" width="6.97" height="1.2" fill="#fff" fill-opacity="0.75"/><rect x="583.14" y="725.5999999999999" width="5.29" height="1.2" fill="#fff" fill-opacity="0.75"/><rect x="589.43" y="725.5999999999999" width="12.71" height="1.2" fill="#fff" fill-opacity="0.75"/><rect x="603.14" y="725.5999999999999" width="4.64" height="1.2" fill="#fff" fill-opacity="0.75"/><rect x="608.78" y="725.5999999999999" width="5.87" height="1.2" fill="#fff" fill-opacity="0.75"/><rect x="615.66" y="725.5999999999999" width="6.13" height="1.2" fill="#fff" fill-opacity="0.75"/><rect x="622.79" y="725.5999999999999" width="12.49" height="1.2" fill="#fff" fill-opacity="0.75"/><rect x="636.28" y="725.5999999999999" width="3.73" height="1.2" fill="#fff" fill-opacity="0.75"/><rect x="641.01" y="725.5999999999999" width="12.54" height="1.2" fill="#fff" fill-opacity="0.75"/><rect x="654.56" y="725.5999999999999" width="3.55" height="1.2" fill="#fff" fill-opacity="0.75"/><rect x="659.11" y="725.5999999999999" width="10.43" height="1.2" fill="#fff" fill-opacity="0.75"/><rect x="670.54" y="725.5999999999999" width="5.10" height="1.2" fill="#fff" fill-opacity="0.75"/><rect x="676.63" y="725.5999999999999" width="9.47" height="1.2" fill="#fff" fill-opacity="0.75"/><rect x="687.11" y="725.5999999999999" width="3.93" height="1.2" fill="#fff" fill-opacity="0.75"/><rect x="692.04" y="725.5999999999999" width="5.13" height="1.2" fill="#fff" fill-opacity="0.75"/><rect x="698.17" y="725.5999999999999" width="11.54" height="1.2" fill="#fff" fill-opacity="0.75"/><rect x="557.6" y="629.0999999999999" width="157" height="0.8" fill="#d0d0d0"/><rect x="558.60" y="626.60" width="6.89" height="1.2" fill="#222" fill-opacity="0.8"/><rect x="566.83" y="626.60" width="2.65" height="1.2" fill="#222" fill-opacity="0.8"/><rect x="570.55" y="626.60" width="0.05" height="1.2" fill="#222" fill-opacity="0.8"/><rect x="568" y="631.6" width="17" height="1.3" fill="#111"/><rect x="567.4" y="640.7" width="58" height="69.8" fill="#6f8ad0"/><defs><radialGradient id="face" cx="0.45" cy="0.6" r="0.6"><stop offset="0" stop-color="#9cc0ee"/><stop offset="0.35" stop-color="#3f6cc0"/><stop offset="0.7" stop-color="#1a2a70"/><stop offset="1" stop-color="#0c0f2a"/></radialGradient></defs><circle cx="596.6" cy="672.9" r="19.5" fill="url(#face)"/><path d="M578 668 A19.5 19.5 0 0 0 583 686 L586 680 Z" fill="#7a4ab0" fill-opacity="0.8"/><path d="M615 664 A19.5 19.5 0 0 1 613 684 L610 676 Z" fill="#7a4ab0" fill-opacity="0.8"/><circle cx="592.3" cy="676.0" r="0.39" fill="#fff" fill-opacity="0.52"/><circle cx="597.0" cy="666.1" r="0.49" fill="#fff" fill-opacity="0.74"/><circle cx="572.9" cy="666.7" r="0.54" fill="#fff" fill-opacity="0.61"/><circle cx="592.3" cy="669.0" r="0.75" fill="#fff" fill-opacity="0.59"/><circle cx="583.1" cy="684.9" r="0.38" fill="#fff" fill-opacity="0.73"/><circle cx="601.8" cy="665.4" r="0.77" fill="#fff" fill-opacity="0.66"/><circle cx="598.5" cy="660.2" r="0.50" fill="#fff" fill-opacity="0.53"/><circle cx="601.9" cy="673.2" r="0.79" fill="#fff" fill-opacity="0.67"/><circle cx="573.9" cy="678.7" r="0.60" fill="#fff" fill-opacity="0.89"/><circle cx="593.1" cy="677.5" r="0.76" fill="#fff" fill-opacity="0.48"/><circle cx="600.6" cy="657.2" r="0.79" fill="#fff" fill-opacity="0.87"/><circle cx="596.1" cy="672.0" r="0.31" fill="#fff" fill-opacity="0.64"/><circle cx="597.5" cy="670.9" r="0.51" fill="#fff" fill-opacity="0.44"/><circle cx="596.5" cy="673.0" r="0.46" fill="#fff" fill-opacity="0.66"/><circle cx="602.8" cy="693.4" r="0.33" fill="#fff" fill-opacity="0.51"/><circle cx="596.1" cy="683.9" r="0.68" fill="#fff" fill-opacity="0.58"/><circle cx="588.5" cy="649.2" r="0.37" fill="#fff" fill-opacity="0.83"/><circle cx="580.9" cy="660.9" r="0.60" fill="#fff" fill-opacity="0.60"/><circle cx="599.7" cy="675.1" r="0.39" fill="#fff" fill-opacity="0.49"/><circle cx="599.9" cy="677.4" r="0.58" fill="#fff" fill-opacity="0.79"/><circle cx="603.1" cy="650.8" r="0.36" fill="#fff" fill-opacity="0.81"/><circle cx="597.3" cy="674.7" r="0.44" fill="#fff" fill-opacity="0.69"/><circle cx="602.0" cy="674.6" r="0.50" fill="#fff" fill-opacity="0.81"/><circle cx="587.9" cy="679.6" r="0.49" fill="#fff" fill-opacity="0.45"/><circle cx="614.0" cy="655.6" r="0.66" fill="#fff" fill-opacity="0.60"/><circle cx="589.0" cy="675.8" r="0.63" fill="#fff" fill-opacity="0.73"/><circle cx="588.1" cy="695.1" r="0.66" fill="#fff" fill-opacity="0.51"/><circle cx="603.0" cy="655.8" r="0.42" fill="#fff" fill-opacity="0.55"/><circle cx="596.6" cy="670.7" r="0.52" fill="#fff" fill-opacity="0.88"/><circle cx="596.1" cy="686.6" r="0.75" fill="#fff" fill-opacity="0.84"/><circle cx="599.9" cy="658.8" r="0.76" fill="#fff" fill-opacity="0.53"/><circle cx="604.4" cy="665.3" r="0.63" fill="#fff" fill-opacity="0.71"/><circle cx="593.0" cy="691.0" r="0.60" fill="#fff" fill-opacity="0.89"/><circle cx="590.9" cy="662.5" r="0.49" fill="#fff" fill-opacity="0.84"/><circle cx="586.8" cy="687.9" r="0.65" fill="#fff" fill-opacity="0.88"/><circle cx="602.6" cy="689.9" r="0.39" fill="#fff" fill-opacity="0.72"/><circle cx="586.0" cy="656.0" r="0.73" fill="#fff" fill-opacity="0.52"/><circle cx="602.3" cy="665.7" r="0.50" fill="#fff" fill-opacity="0.46"/><circle cx="596.6" cy="672.9" r="0.46" fill="#fff" fill-opacity="0.74"/><circle cx="596.5" cy="668.3" r="0.69" fill="#fff" fill-opacity="0.62"/><circle cx="602.0" cy="692.5" r="0.67" fill="#fff" fill-opacity="0.63"/><circle cx="580.8" cy="669.6" r="0.62" fill="#fff" fill-opacity="0.78"/><circle cx="597.2" cy="667.5" r="0.31" fill="#fff" fill-opacity="0.45"/><circle cx="591.3" cy="687.7" r="0.78" fill="#fff" fill-opacity="0.61"/><circle cx="586.7" cy="684.0" r="0.77" fill="#fff" fill-opacity="0.69"/><circle cx="591.1" cy="692.7" r="0.80" fill="#fff" fill-opacity="0.80"/><circle cx="593.0" cy="675.7" r="0.53" fill="#fff" fill-opacity="0.46"/><circle cx="604.5" cy="681.8" r="0.73" fill="#fff" fill-opacity="0.75"/><circle cx="575.0" cy="685.7" r="0.39" fill="#fff" fill-opacity="0.53"/><circle cx="594.4" cy="688.4" r="0.74" fill="#fff" fill-opacity="0.59"/><circle cx="607.9" cy="650.2" r="0.54" fill="#fff" fill-opacity="0.85"/><circle cx="606.1" cy="664.6" r="0.38" fill="#fff" fill-opacity="0.44"/><circle cx="597.4" cy="685.4" r="0.31" fill="#fff" fill-opacity="0.56"/><circle cx="587.9" cy="673.2" r="0.67" fill="#fff" fill-opacity="0.68"/><circle cx="580.5" cy="669.3" r="0.59" fill="#fff" fill-opacity="0.61"/><circle cx="604.3" cy="686.8" r="0.32" fill="#fff" fill-opacity="0.42"/><circle cx="593.3" cy="678.1" r="0.68" fill="#fff" fill-opacity="0.48"/><circle cx="579.8" cy="680.0" r="0.51" fill="#fff" fill-opacity="0.80"/><circle cx="599.9" cy="676.0" r="0.44" fill="#fff" fill-opacity="0.58"/><circle cx="591.8" cy="670.9" r="0.58" fill="#fff" fill-opacity="0.75"/><circle cx="584.4" cy="654.7" r="0.34" fill="#fff" fill-opacity="0.74"/><circle cx="593.2" cy="650.7" r="0.38" fill="#fff" fill-opacity="0.44"/><circle cx="597.6" cy="655.3" r="0.38" fill="#fff" fill-opacity="0.84"/><circle cx="593.3" cy="656.5" r="0.68" fill="#fff" fill-opacity="0.71"/><circle cx="595.9" cy="674.1" r="0.47" fill="#fff" fill-opacity="0.71"/><circle cx="598.4" cy="677.4" r="0.36" fill="#fff" fill-opacity="0.65"/><circle cx="615.2" cy="668.7" r="0.31" fill="#fff" fill-opacity="0.59"/><circle cx="595.6" cy="670.5" r="0.70" fill="#fff" fill-opacity="0.52"/><circle cx="577.3" cy="680.4" r="0.74" fill="#fff" fill-opacity="0.44"/><circle cx="605.9" cy="651.1" r="0.72" fill="#fff" fill-opacity="0.79"/><path d="M585 660 C590 656 600 655 606 661" fill="none" stroke="#e8eeff" stroke-width="1" stroke-opacity="0.8"/><rect x="573" y="668.2" width="24" height="4.7" fill="#9cd23c"/><rect x="609" y="668" width="2.5" height="8" fill="#e0a0c0" fill-opacity="0.8"/><rect x="611" y="672" width="6" height="1.5" fill="#9cd23c"/><rect x="575.40" y="649.6" width="1.3" height="3.6" fill="#9cd23c" fill-opacity="0.85"/><rect x="579.65" y="649.6" width="1.3" height="3.6" fill="#9cd23c" fill-opacity="0.85"/><rect x="583.90" y="649.6" width="1.3" height="3.6" fill="#9cd23c" fill-opacity="0.85"/><rect x="588.15" y="649.6" width="1.3" height="3.6" fill="#9cd23c" fill-opacity="0.85"/><rect x="592.40" y="649.6" width="1.3" height="3.6" fill="#9cd23c" fill-opacity="0.85"/><rect x="596.65" y="649.6" width="1.3" height="3.6" fill="#9cd23c" fill-opacity="0.85"/><rect x="600.90" y="649.6" width="1.3" height="3.6" fill="#9cd23c" fill-opacity="0.85"/><rect x="605.15" y="649.6" width="1.3" height="3.6" fill="#9cd23c" fill-opacity="0.85"/><rect x="609.40" y="649.6" width="1.3" height="3.6" fill="#9cd23c" fill-opacity="0.85"/><rect x="613.65" y="649.6" width="1.3" height="3.6" fill="#9cd23c" fill-opacity="0.85"/><rect x="572" y="694.4" width="48.4" height="1.3" fill="#9cd23c"/><rect x="580" y="692.3" width="32" height="1.6" fill="#f0f4ff" fill-opacity="0.75"/><path d="M594 706 L599 701" stroke="#9cd23c" stroke-width="0.5"/><rect x="644" y="663.5" width="15" height="1.6" fill="#111"/><rect x="668.4" y="662.8" width="11.5" height="13.5" fill="#fff" stroke="#ddd" stroke-width="0.4"/><rect x="669" y="663.5" width="10.3" height="8.7" fill="#9ad431"/><rect x="669.5" y="673.5" width="5" height="1.2" fill="#222"/><rect x="679.9" y="662.8" width="11.5" height="13.5" fill="#fff" stroke="#ddd" stroke-width="0.4"/><rect x="680.5" y="663.5" width="10.3" height="8.7" fill="#fff"/><rect x="681.0" y="673.5" width="5" height="1.2" fill="#222"/><rect x="691.8" y="662.8" width="11.5" height="13.5" fill="#fff" stroke="#ddd" stroke-width="0.4"/><rect x="692.4" y="663.5" width="10.3" height="8.7" fill="#1b1d52"/><rect x="692.9" y="673.5" width="5" height="1.2" fill="#222"/><rect x="644.5" y="679" width="20" height="1.6" fill="#111"/><rect x="644.5" y="681.5" width="21" height="1.6" fill="#111"/><rect x="644.5" y="685.5" width="19" height="1.6" fill="#111"/><rect x="669.00" y="679.50" width="3.87" height="1.2" fill="#222" fill-opacity="0.85"/><rect x="673.72" y="679.50" width="2.23" height="1.2" fill="#222" fill-opacity="0.85"/><rect x="676.86" y="679.50" width="3.50" height="1.2" fill="#222" fill-opacity="0.85"/><rect x="681.09" y="679.50" width="6.72" height="1.2" fill="#222" fill-opacity="0.85"/><rect x="689.11" y="679.50" width="2.89" height="1.2" fill="#222" fill-opacity="0.85"/><rect x="669.00" y="682.00" width="2.62" height="1.2" fill="#222" fill-opacity="0.85"/><rect x="672.56" y="682.00" width="2.36" height="1.2" fill="#222" fill-opacity="0.85"/><rect x="675.80" y="682.00" width="5.03" height="1.2" fill="#222" fill-opacity="0.85"/><rect x="681.69" y="682.00" width="3.67" height="1.2" fill="#222" fill-opacity="0.85"/><rect x="686.23" y="682.00" width="6.15" height="1.2" fill="#222" fill-opacity="0.85"/><rect x="693.00" y="682.00" width="1.00" height="1.2" fill="#222" fill-opacity="0.85"/><rect x="669.00" y="686.00" width="4.74" height="1.2" fill="#222" fill-opacity="0.85"/><rect x="674.89" y="686.00" width="2.09" height="1.2" fill="#222" fill-opacity="0.85"/><rect x="678.28" y="686.00" width="3.44" height="1.2" fill="#222" fill-opacity="0.85"/><rect x="682.64" y="686.00" width="4.56" height="1.2" fill="#222" fill-opacity="0.85"/><rect x="688.52" y="686.00" width="3.14" height="1.2" fill="#222" fill-opacity="0.85"/><rect x="692.68" y="686.00" width="6.96" height="1.2" fill="#222" fill-opacity="0.85"/><rect x="724.2" y="618.3" width="163.5" height="116.8" fill="#3e3e3e" fill-opacity="0.55"/><rect x="721.7" y="615.3" width="163.5" height="116.8" fill="#adadad"/><rect x="723.7" y="617.0999999999999" width="159.5" height="112.8" fill="#fff"/><rect x="724.2" y="617.9" width="158.5" height="7.4" fill="#000"/><rect x="726.2" y="620.5" width="16" height="2.4" fill="#fff" fill-opacity="0.9"/><rect x="724.2" y="723.8" width="158.5" height="4.8" fill="#000"/><rect x="726.70" y="725.5999999999999" width="4.69" height="1.2" fill="#fff" fill-opacity="0.75"/><rect x="732.39" y="725.5999999999999" width="7.55" height="1.2" fill="#fff" fill-opacity="0.75"/><rect x="740.94" y="725.5999999999999" width="11.36" height="1.2" fill="#fff" fill-opacity="0.75"/><rect x="753.30" y="725.5999999999999" width="6.79" height="1.2" fill="#fff" fill-opacity="0.75"/><rect x="761.10" y="725.5999999999999" width="13.59" height="1.2" fill="#fff" fill-opacity="0.75"/><rect x="775.68" y="725.5999999999999" width="7.61" height="1.2" fill="#fff" fill-opacity="0.75"/><rect x="784.30" y="725.5999999999999" width="8.10" height="1.2" fill="#fff" fill-opacity="0.75"/><rect x="793.39" y="725.5999999999999" width="13.27" height="1.2" fill="#fff" fill-opacity="0.75"/><rect x="807.66" y="725.5999999999999" width="5.65" height="1.2" fill="#fff" fill-opacity="0.75"/><rect x="814.31" y="725.5999999999999" width="3.01" height="1.2" fill="#fff" fill-opacity="0.75"/><rect x="818.32" y="725.5999999999999" width="5.10" height="1.2" fill="#fff" fill-opacity="0.75"/><rect x="824.41" y="725.5999999999999" width="13.72" height="1.2" fill="#fff" fill-opacity="0.75"/><rect x="839.13" y="725.5999999999999" width="10.58" height="1.2" fill="#fff" fill-opacity="0.75"/><rect x="850.71" y="725.5999999999999" width="10.81" height="1.2" fill="#fff" fill-opacity="0.75"/><rect x="862.52" y="725.5999999999999" width="11.72" height="1.2" fill="#fff" fill-opacity="0.75"/><rect x="875.25" y="725.5999999999999" width="3.95" height="1.2" fill="#fff" fill-opacity="0.75"/><rect x="724.7" y="629.0999999999999" width="157" height="0.8" fill="#d0d0d0"/><rect x="725.70" y="626.60" width="2.18" height="1.2" fill="#222" fill-opacity="0.8"/><rect x="728.79" y="626.60" width="5.86" height="1.2" fill="#222" fill-opacity="0.8"/><rect x="735.69" y="626.60" width="3.01" height="1.2" fill="#222" fill-opacity="0.8"/><rect x="727.7" y="647.8" width="18.8" height="37.3" fill="#0c0c0c"/><rect x="752.2" y="647.8" width="18.8" height="37.3" fill="#0c0c0c"/><ellipse cx="737.4" cy="642" rx="2.6" ry="6.3" fill="none" stroke="#aaa" stroke-width="0.6"/><ellipse cx="761.6" cy="642" rx="2.6" ry="6.3" fill="none" stroke="#aaa" stroke-width="0.6"/><circle cx="737.4" cy="651" r="0.9" fill="#fff"/><circle cx="761.6" cy="651" r="0.9" fill="#fff"/><text x="735" y="678" transform="rotate(-62 735 678)" font-family="Liberation Sans" font-weight="bold" font-size="6" fill="none" stroke="#777" stroke-width="0.35">BRAND</text><text x="741" y="679" transform="rotate(-62 741 679)" font-family="Liberation Sans" font-weight="bold" font-size="6" fill="none" stroke="#777" stroke-width="0.35">NAME</text><path d="M749 667 L749 670" stroke="#f0a" stroke-width="0.8"/><path d="M735 686.5 L740 686.5" stroke="#f0a" stroke-width="0.7"/><rect x="742" y="638.5" width="11" height="1.3" fill="#111"/><rect x="727.50" y="692.80" width="2.82" height="1.1" fill="#111" fill-opacity="0.9"/><rect x="731.61" y="692.80" width="6.65" height="1.1" fill="#111" fill-opacity="0.9"/><rect x="738.96" y="692.80" width="0.54" height="1.1" fill="#111" fill-opacity="0.9"/><rect x="727.50" y="694.20" width="6.51" height="1.1" fill="#111" fill-opacity="0.9"/><rect x="734.62" y="694.20" width="6.32" height="1.1" fill="#111" fill-opacity="0.9"/><rect x="741.63" y="694.20" width="1.87" height="1.1" fill="#111" fill-opacity="0.9"/><rect x="727.50" y="697.50" width="2.19" height="1.1" fill="#111" fill-opacity="0.9"/><rect x="730.42" y="697.50" width="6.90" height="1.1" fill="#111" fill-opacity="0.9"/><rect x="737.99" y="697.50" width="3.32" height="1.1" fill="#111" fill-opacity="0.9"/><rect x="742.17" y="697.50" width="5.87" height="1.1" fill="#111" fill-opacity="0.9"/><rect x="748.71" y="697.50" width="2.79" height="1.1" fill="#111" fill-opacity="0.9"/><rect x="727.50" y="699.50" width="5.80" height="1.1" fill="#111" fill-opacity="0.9"/><rect x="734.17" y="699.50" width="6.40" height="1.1" fill="#111" fill-opacity="0.9"/><rect x="741.58" y="699.50" width="2.38" height="1.1" fill="#111" fill-opacity="0.9"/><rect x="745.07" y="699.50" width="3.30" height="1.1" fill="#111" fill-opacity="0.9"/><rect x="749.52" y="699.50" width="1.98" height="1.1" fill="#111" fill-opacity="0.9"/><rect x="727.50" y="701.00" width="5.31" height="1.1" fill="#111" fill-opacity="0.9"/><rect x="733.46" y="701.00" width="4.74" height="1.1" fill="#111" fill-opacity="0.9"/><rect x="738.87" y="701.00" width="2.63" height="1.1" fill="#111" fill-opacity="0.9"/><rect x="756.00" y="692.80" width="5.13" height="1.1" fill="#111" fill-opacity="0.9"/><rect x="761.90" y="692.80" width="3.09" height="1.1" fill="#111" fill-opacity="0.9"/><rect x="765.83" y="692.80" width="0.17" height="1.1" fill="#111" fill-opacity="0.9"/><rect x="756.00" y="694.20" width="2.25" height="1.1" fill="#111" fill-opacity="0.9"/><rect x="759.31" y="694.20" width="2.71" height="1.1" fill="#111" fill-opacity="0.9"/><rect x="762.64" y="694.20" width="2.36" height="1.1" fill="#111" fill-opacity="0.9"/><rect x="755.00" y="685.80" width="6.26" height="1.1" fill="#111" fill-opacity="0.9"/><rect x="762.38" y="685.80" width="6.20" height="1.1" fill="#111" fill-opacity="0.9"/><rect x="742.3" y="707.3" width="4" height="4" fill="#0c0c0c"/><rect x="747.50" y="708.30" width="3.33" height="1.1" fill="#111" fill-opacity="0.8"/><rect x="751.47" y="708.30" width="6.89" height="1.1" fill="#111" fill-opacity="0.8"/><rect x="759.04" y="708.30" width="2.46" height="1.1" fill="#111" fill-opacity="0.8"/><rect x="792.5" y="633.6" width="29.4" height="19.4" fill="#fff" stroke="#999" stroke-width="0.6"/><rect x="796" y="640" width="23" height="2.2" fill="#222"/><rect x="805" y="643.3" width="4" height="1.5" fill="#222"/><rect x="803" y="645.5" width="9" height="1.2" fill="#999"/><rect x="798" y="631" width="17" height="1.2" fill="#111"/><rect x="804" y="655.5" width="4" height="0.8" fill="#f0a"/><rect x="795.00" y="659.00" width="6.81" height="1.1" fill="#111" fill-opacity="0.9"/><rect x="802.79" y="659.00" width="4.60" height="1.1" fill="#111" fill-opacity="0.9"/><rect x="808.31" y="659.00" width="2.62" height="1.1" fill="#111" fill-opacity="0.9"/><rect x="812.21" y="659.00" width="3.95" height="1.1" fill="#111" fill-opacity="0.9"/><rect x="817.11" y="659.00" width="3.99" height="1.1" fill="#111" fill-opacity="0.9"/><rect x="821.89" y="659.00" width="5.11" height="1.1" fill="#111" fill-opacity="0.9"/><rect x="795.00" y="661.00" width="3.07" height="1.1" fill="#111" fill-opacity="0.9"/><rect x="799.33" y="661.00" width="5.66" height="1.1" fill="#111" fill-opacity="0.9"/><rect x="806.38" y="661.00" width="4.74" height="1.1" fill="#111" fill-opacity="0.9"/><rect x="812.04" y="661.00" width="6.85" height="1.1" fill="#111" fill-opacity="0.9"/><rect x="795" y="665" width="3.5" height="3.5" fill="#fff" stroke="#ccc" stroke-width="0.4"/><rect x="795" y="669" width="3.5" height="3.5" fill="#0c0c0c"/><rect x="800.00" y="666.00" width="6.92" height="1.1" fill="#111" fill-opacity="0.8"/><rect x="807.79" y="666.00" width="2.61" height="1.1" fill="#111" fill-opacity="0.8"/><rect x="811.42" y="666.00" width="2.73" height="1.1" fill="#111" fill-opacity="0.8"/><rect x="815.22" y="666.00" width="4.66" height="1.1" fill="#111" fill-opacity="0.8"/><rect x="820.65" y="666.00" width="3.72" height="1.1" fill="#111" fill-opacity="0.8"/><rect x="825.12" y="666.00" width="0.88" height="1.1" fill="#111" fill-opacity="0.8"/><rect x="800.00" y="670.00" width="3.10" height="1.1" fill="#111" fill-opacity="0.8"/><rect x="803.70" y="670.00" width="6.81" height="1.1" fill="#111" fill-opacity="0.8"/><rect x="811.74" y="670.00" width="4.53" height="1.1" fill="#111" fill-opacity="0.8"/><rect x="817.45" y="670.00" width="2.80" height="1.1" fill="#111" fill-opacity="0.8"/><rect x="820.86" y="670.00" width="2.91" height="1.1" fill="#111" fill-opacity="0.8"/><rect x="824.77" y="670.00" width="1.23" height="1.1" fill="#111" fill-opacity="0.8"/><circle cx="806.2" cy="695.4" r="8.8" fill="#fff" stroke="#222" stroke-width="0.7"/><path d="M801 691 L811 699 M811 691 L801 699" stroke="#111" stroke-width="0.8"/><rect x="796" y="684" width="19" height="1.3" fill="#111"/><path d="M797.5 705 L815 705" stroke="#f9c" stroke-width="0.5"/><rect x="794.00" y="709.50" width="3.30" height="1.1" fill="#111" fill-opacity="0.9"/><rect x="798.42" y="709.50" width="5.12" height="1.1" fill="#111" fill-opacity="0.9"/><rect x="804.35" y="709.50" width="4.51" height="1.1" fill="#111" fill-opacity="0.9"/><rect x="809.98" y="709.50" width="2.49" height="1.1" fill="#111" fill-opacity="0.9"/><rect x="813.72" y="709.50" width="5.01" height="1.1" fill="#111" fill-opacity="0.9"/><rect x="819.86" y="709.50" width="4.78" height="1.1" fill="#111" fill-opacity="0.9"/><rect x="825.28" y="709.50" width="4.59" height="1.1" fill="#111" fill-opacity="0.9"/><rect x="795" y="713.5" width="3.5" height="3.5" fill="#fff" stroke="#ccc" stroke-width="0.4"/><rect x="795" y="718" width="3.5" height="3.5" fill="#0c0c0c"/><rect x="800.00" y="715.00" width="4.06" height="1.1" fill="#111" fill-opacity="0.8"/><rect x="804.66" y="715.00" width="3.03" height="1.1" fill="#111" fill-opacity="0.8"/><rect x="808.84" y="715.00" width="4.22" height="1.1" fill="#111" fill-opacity="0.8"/><rect x="814.09" y="715.00" width="4.10" height="1.1" fill="#111" fill-opacity="0.8"/><rect x="819.17" y="715.00" width="3.83" height="1.1" fill="#111" fill-opacity="0.8"/><rect x="800.00" y="719.00" width="2.60" height="1.1" fill="#111" fill-opacity="0.8"/><rect x="803.53" y="719.00" width="3.94" height="1.1" fill="#111" fill-opacity="0.8"/><rect x="808.84" y="719.00" width="2.48" height="1.1" fill="#111" fill-opacity="0.8"/><rect x="812.35" y="719.00" width="5.11" height="1.1" fill="#111" fill-opacity="0.8"/><rect x="818.73" y="719.00" width="4.27" height="1.1" fill="#111" fill-opacity="0.8"/><rect x="841.3" y="649.4" width="31.7" height="27.5" fill="#fff" stroke="#aaa" stroke-width="0.6"/><rect x="840.5" y="646.5" width="29" height="1.3" fill="#111"/><path d="M838.5 651 L838.5 676" stroke="#f9c" stroke-width="0.5"/><rect x="841.00" y="680.00" width="3.71" height="1.1" fill="#111" fill-opacity="0.9"/><rect x="845.78" y="680.00" width="2.79" height="1.1" fill="#111" fill-opacity="0.9"/><rect x="849.22" y="680.00" width="4.95" height="1.1" fill="#111" fill-opacity="0.9"/><rect x="854.79" y="680.00" width="3.32" height="1.1" fill="#111" fill-opacity="0.9"/><rect x="859.48" y="680.00" width="3.84" height="1.1" fill="#111" fill-opacity="0.9"/><rect x="864.34" y="680.00" width="6.14" height="1.1" fill="#111" fill-opacity="0.9"/><rect x="841.00" y="683.00" width="5.97" height="1.1" fill="#111" fill-opacity="0.9"/><rect x="847.93" y="683.00" width="5.37" height="1.1" fill="#111" fill-opacity="0.9"/><rect x="854.05" y="683.00" width="4.86" height="1.1" fill="#111" fill-opacity="0.9"/><rect x="860.19" y="683.00" width="2.22" height="1.1" fill="#111" fill-opacity="0.9"/><rect x="863.02" y="683.00" width="6.60" height="1.1" fill="#111" fill-opacity="0.9"/><rect x="870.92" y="683.00" width="2.32" height="1.1" fill="#111" fill-opacity="0.9"/><rect x="874.45" y="683.00" width="2.55" height="1.1" fill="#111" fill-opacity="0.9"/><rect x="841.00" y="684.50" width="4.06" height="1.1" fill="#111" fill-opacity="0.9"/><rect x="846.06" y="684.50" width="4.30" height="1.1" fill="#111" fill-opacity="0.9"/><rect x="851.40" y="684.50" width="4.80" height="1.1" fill="#111" fill-opacity="0.9"/><rect x="856.83" y="684.50" width="4.64" height="1.1" fill="#111" fill-opacity="0.9"/><rect x="862.43" y="684.50" width="4.57" height="1.1" fill="#111" fill-opacity="0.9"/><rect x="842" y="689" width="3.5" height="3.5" fill="#fff" stroke="#ccc" stroke-width="0.4"/><rect x="842" y="694" width="3.5" height="3.5" fill="#0c0c0c"/><rect x="847.00" y="690.00" width="2.88" height="1.1" fill="#111" fill-opacity="0.8"/><rect x="851.06" y="690.00" width="3.60" height="1.1" fill="#111" fill-opacity="0.8"/><rect x="855.95" y="690.00" width="5.00" height="1.1" fill="#111" fill-opacity="0.8"/><rect x="862.14" y="690.00" width="3.27" height="1.1" fill="#111" fill-opacity="0.8"/><rect x="866.63" y="690.00" width="3.37" height="1.1" fill="#111" fill-opacity="0.8"/><rect x="847.00" y="695.00" width="2.68" height="1.1" fill="#111" fill-opacity="0.8"/><rect x="850.58" y="695.00" width="2.14" height="1.1" fill="#111" fill-opacity="0.8"/><rect x="853.53" y="695.00" width="4.76" height="1.1" fill="#111" fill-opacity="0.8"/><rect x="859.41" y="695.00" width="6.43" height="1.1" fill="#111" fill-opacity="0.8"/><rect x="866.96" y="695.00" width="3.04" height="1.1" fill="#111" fill-opacity="0.8"/><rect x="891.1" y="618.3" width="163.5" height="116.8" fill="#3e3e3e" fill-opacity="0.55"/><rect x="888.6" y="615.3" width="163.5" height="116.8" fill="#adadad"/><rect x="890.6" y="617.0999999999999" width="159.5" height="112.8" fill="#fff"/><rect x="891.1" y="617.9" width="158.5" height="7.4" fill="#000"/><rect x="893.1" y="620.5" width="16" height="2.4" fill="#fff" fill-opacity="0.9"/><rect x="891.1" y="723.8" width="158.5" height="4.8" fill="#000"/><rect x="893.60" y="725.5999999999999" width="3.88" height="1.2" fill="#fff" fill-opacity="0.75"/><rect x="898.48" y="725.5999999999999" width="9.42" height="1.2" fill="#fff" fill-opacity="0.75"/><rect x="908.90" y="725.5999999999999" width="13.07" height="1.2" fill="#fff" fill-opacity="0.75"/><rect x="922.98" y="725.5999999999999" width="7.25" height="1.2" fill="#fff" fill-opacity="0.75"/><rect x="931.22" y="725.5999999999999" width="7.12" height="1.2" fill="#fff" fill-opacity="0.75"/><rect x="939.34" y="725.5999999999999" width="7.60" height="1.2" fill="#fff" fill-opacity="0.75"/><rect x="947.94" y="725.5999999999999" width="10.74" height="1.2" fill="#fff" fill-opacity="0.75"/><rect x="959.69" y="725.5999999999999" width="12.81" height="1.2" fill="#fff" fill-opacity="0.75"/><rect x="973.49" y="725.5999999999999" width="7.15" height="1.2" fill="#fff" fill-opacity="0.75"/><rect x="981.65" y="725.5999999999999" width="10.02" height="1.2" fill="#fff" fill-opacity="0.75"/><rect x="992.67" y="725.5999999999999" width="13.61" height="1.2" fill="#fff" fill-opacity="0.75"/><rect x="1007.28" y="725.5999999999999" width="13.01" height="1.2" fill="#fff" fill-opacity="0.75"/><rect x="1021.29" y="725.5999999999999" width="7.14" height="1.2" fill="#fff" fill-opacity="0.75"/><rect x="1029.43" y="725.5999999999999" width="3.12" height="1.2" fill="#fff" fill-opacity="0.75"/><rect x="1033.55" y="725.5999999999999" width="9.38" height="1.2" fill="#fff" fill-opacity="0.75"/><rect x="1043.93" y="725.5999999999999" width="2.17" height="1.2" fill="#fff" fill-opacity="0.75"/><rect x="891.6" y="629.0999999999999" width="157" height="0.8" fill="#d0d0d0"/><rect x="892.60" y="626.60" width="3.86" height="1.2" fill="#222" fill-opacity="0.8"/><rect x="897.25" y="626.60" width="3.57" height="1.2" fill="#222" fill-opacity="0.8"/><rect x="901.60" y="626.60" width="1.00" height="1.2" fill="#222" fill-opacity="0.8"/><rect x="892.9" y="629.4" width="92" height="2.8" fill="#a8a8a8"/><rect x="892.9" y="632.20" width="92" height="3.25" fill="#ffffff"/><rect x="892.9" y="635.20" width="92" height="0.35" fill="#9a9a9a"/><rect x="892.9" y="635.45" width="92" height="3.25" fill="#dedede"/><rect x="892.9" y="638.45" width="92" height="0.35" fill="#9a9a9a"/><rect x="892.9" y="638.70" width="92" height="3.25" fill="#ffffff"/><rect x="892.9" y="641.70" width="92" height="0.35" fill="#9a9a9a"/><rect x="892.9" y="641.95" width="92" height="3.25" fill="#dedede"/><rect x="892.9" y="644.95" width="92" height="0.35" fill="#9a9a9a"/><rect x="892.9" y="645.20" width="92" height="3.25" fill="#ffffff"/><rect x="892.9" y="648.20" width="92" height="0.35" fill="#9a9a9a"/><rect x="892.9" y="648.45" width="92" height="3.25" fill="#dedede"/><rect x="892.9" y="651.45" width="92" height="0.35" fill="#9a9a9a"/><rect x="892.9" y="651.70" width="92" height="3.25" fill="#ffffff"/><rect x="892.9" y="654.70" width="92" height="0.35" fill="#9a9a9a"/><rect x="892.9" y="654.95" width="92" height="3.25" fill="#dedede"/><rect x="892.9" y="657.95" width="92" height="0.35" fill="#9a9a9a"/><rect x="892.9" y="658.20" width="92" height="3.25" fill="#ffffff"/><rect x="892.9" y="661.20" width="92" height="0.35" fill="#9a9a9a"/><rect x="892.9" y="661.45" width="92" height="3.25" fill="#dedede"/><rect x="892.9" y="664.45" width="92" height="0.35" fill="#9a9a9a"/><rect x="892.9" y="664.70" width="92" height="3.25" fill="#ffffff"/><rect x="892.9" y="667.70" width="92" height="0.35" fill="#9a9a9a"/><rect x="892.9" y="667.95" width="92" height="3.25" fill="#dedede"/><rect x="892.9" y="670.95" width="92" height="0.35" fill="#9a9a9a"/><rect x="892.9" y="671.20" width="92" height="3.25" fill="#ffffff"/><rect x="892.9" y="674.20" width="92" height="0.35" fill="#9a9a9a"/><rect x="892.9" y="674.45" width="92" height="3.25" fill="#dedede"/><rect x="892.9" y="677.45" width="92" height="0.35" fill="#9a9a9a"/><rect x="892.9" y="677.70" width="92" height="3.25" fill="#ffffff"/><rect x="892.9" y="680.70" width="92" height="0.35" fill="#9a9a9a"/><rect x="892.9" y="680.95" width="92" height="3.25" fill="#dedede"/><rect x="892.9" y="683.95" width="92" height="0.35" fill="#9a9a9a"/><rect x="892.9" y="684.20" width="92" height="3.25" fill="#ffffff"/><rect x="892.9" y="687.20" width="92" height="0.35" fill="#9a9a9a"/><rect x="892.9" y="687.45" width="92" height="3.25" fill="#dedede"/><rect x="892.9" y="690.45" width="92" height="0.35" fill="#9a9a9a"/><rect x="892.9" y="690.70" width="92" height="3.25" fill="#ffffff"/><rect x="892.9" y="693.70" width="92" height="0.35" fill="#9a9a9a"/><rect x="892.9" y="693.95" width="92" height="3.25" fill="#dedede"/><rect x="892.9" y="696.95" width="92" height="0.35" fill="#9a9a9a"/><rect x="892.9" y="697.20" width="92" height="3.25" fill="#ffffff"/><rect x="892.9" y="700.20" width="92" height="0.35" fill="#9a9a9a"/><rect x="892.9" y="700.45" width="92" height="3.25" fill="#dedede"/><rect x="892.9" y="703.45" width="92" height="0.35" fill="#9a9a9a"/><rect x="892.9" y="703.70" width="92" height="3.25" fill="#ffffff"/><rect x="892.9" y="706.70" width="92" height="0.35" fill="#9a9a9a"/><rect x="892.9" y="706.95" width="92" height="3.25" fill="#dedede"/><rect x="892.9" y="709.95" width="92" height="0.35" fill="#9a9a9a"/><rect x="892.9" y="710.20" width="92" height="3.25" fill="#ffffff"/><rect x="892.9" y="713.20" width="92" height="0.35" fill="#9a9a9a"/><rect x="892.9" y="713.45" width="92" height="3.25" fill="#dedede"/><rect x="892.9" y="716.45" width="92" height="0.35" fill="#9a9a9a"/><rect x="892.9" y="716.70" width="92" height="3.25" fill="#ffffff"/><rect x="892.9" y="719.70" width="92" height="0.35" fill="#9a9a9a"/><rect x="892.9" y="719.95" width="92" height="3.25" fill="#dedede"/><rect x="892.9" y="722.95" width="92" height="0.35" fill="#9a9a9a"/><rect x="900.1" y="629.4" width="0.5" height="93.2" fill="#888"/><rect x="950.4" y="629.4" width="0.5" height="93.2" fill="#888"/><rect x="957.7" y="629.4" width="0.5" height="93.2" fill="#888"/><rect x="964.9" y="629.4" width="0.5" height="93.2" fill="#888"/><rect x="971.6" y="629.4" width="0.5" height="93.2" fill="#888"/><rect x="978.3" y="629.4" width="0.5" height="93.2" fill="#888"/><rect x="894" y="633.30" width="2" height="1.2" fill="#222"/><rect x="901.50" y="633.30" width="5.45" height="1.2" fill="#111" fill-opacity="0.95"/><rect x="908.06" y="633.30" width="4.40" height="1.2" fill="#111" fill-opacity="0.95"/><rect x="913.23" y="633.30" width="3.24" height="1.2" fill="#111" fill-opacity="0.95"/><rect x="965.5" y="633.30" width="2" height="1.3" fill="#222"/><rect x="894" y="636.55" width="2" height="1.2" fill="#222"/><rect x="901.50" y="636.55" width="4.53" height="1.2" fill="#111" fill-opacity="0.95"/><rect x="906.81" y="636.55" width="2.02" height="1.2" fill="#111" fill-opacity="0.95"/><rect x="909.73" y="636.55" width="4.93" height="1.2" fill="#111" fill-opacity="0.95"/><rect x="915.31" y="636.55" width="5.97" height="1.2" fill="#111" fill-opacity="0.95"/><rect x="922.06" y="636.55" width="0.66" height="1.2" fill="#111" fill-opacity="0.95"/><rect x="965.5" y="636.55" width="2" height="1.3" fill="#222"/><rect x="894" y="639.80" width="2" height="1.2" fill="#222"/><rect x="901.50" y="639.80" width="5.69" height="1.2" fill="#111" fill-opacity="0.95"/><rect x="908.49" y="639.80" width="5.08" height="1.2" fill="#111" fill-opacity="0.95"/><rect x="914.20" y="639.80" width="3.64" height="1.2" fill="#111" fill-opacity="0.95"/><rect x="918.84" y="639.80" width="2.58" height="1.2" fill="#111" fill-opacity="0.95"/><rect x="922.78" y="639.80" width="3.84" height="1.2" fill="#111" fill-opacity="0.95"/><rect x="927.35" y="639.80" width="4.11" height="1.2" fill="#111" fill-opacity="0.95"/><rect x="965.5" y="639.80" width="2" height="1.3" fill="#222"/><rect x="894" y="643.05" width="2" height="1.2" fill="#222"/><rect x="901.50" y="643.05" width="4.27" height="1.2" fill="#111" fill-opacity="0.95"/><rect x="906.81" y="643.05" width="3.71" height="1.2" fill="#111" fill-opacity="0.95"/><rect x="911.51" y="643.05" width="2.93" height="1.2" fill="#111" fill-opacity="0.95"/><rect x="915.07" y="643.05" width="6.33" height="1.2" fill="#111" fill-opacity="0.95"/><rect x="922.19" y="643.05" width="5.90" height="1.2" fill="#111" fill-opacity="0.95"/><rect x="928.86" y="643.05" width="1.34" height="1.2" fill="#111" fill-opacity="0.95"/><rect x="965.5" y="643.05" width="2" height="1.3" fill="#222"/><rect x="894" y="646.30" width="2" height="1.2" fill="#222"/><rect x="901.50" y="646.30" width="5.81" height="1.2" fill="#111" fill-opacity="0.95"/><rect x="908.38" y="646.30" width="5.65" height="1.2" fill="#111" fill-opacity="0.95"/><rect x="914.73" y="646.30" width="4.38" height="1.2" fill="#111" fill-opacity="0.95"/><rect x="920.37" y="646.30" width="3.01" height="1.2" fill="#111" fill-opacity="0.95"/><rect x="924.71" y="646.30" width="2.37" height="1.2" fill="#111" fill-opacity="0.95"/><rect x="965.5" y="646.30" width="2" height="1.3" fill="#222"/><rect x="894" y="649.55" width="2" height="1.2" fill="#222"/><rect x="901.50" y="649.55" width="4.26" height="1.2" fill="#111" fill-opacity="0.95"/><rect x="906.67" y="649.55" width="6.97" height="1.2" fill="#111" fill-opacity="0.95"/><rect x="914.55" y="649.55" width="2.13" height="1.2" fill="#111" fill-opacity="0.95"/><rect x="917.36" y="649.55" width="2.72" height="1.2" fill="#111" fill-opacity="0.95"/><rect x="965.5" y="649.55" width="2" height="1.3" fill="#222"/><rect x="894" y="652.80" width="2" height="1.2" fill="#222"/><rect x="901.50" y="652.80" width="4.46" height="1.2" fill="#111" fill-opacity="0.95"/><rect x="907.00" y="652.80" width="5.74" height="1.2" fill="#111" fill-opacity="0.95"/><rect x="913.52" y="652.80" width="5.04" height="1.2" fill="#111" fill-opacity="0.95"/><rect x="919.61" y="652.80" width="2.82" height="1.2" fill="#111" fill-opacity="0.95"/><rect x="965.5" y="652.80" width="2" height="1.3" fill="#222"/><rect x="894" y="656.05" width="2" height="1.2" fill="#222"/><rect x="901.50" y="656.05" width="3.74" height="1.2" fill="#111" fill-opacity="0.95"/><rect x="906.58" y="656.05" width="3.73" height="1.2" fill="#111" fill-opacity="0.95"/><rect x="911.39" y="656.05" width="3.53" height="1.2" fill="#111" fill-opacity="0.95"/><rect x="915.61" y="656.05" width="0.95" height="1.2" fill="#111" fill-opacity="0.95"/><rect x="965.5" y="656.05" width="2" height="1.3" fill="#222"/><rect x="894" y="659.30" width="2" height="1.2" fill="#222"/><rect x="901.50" y="659.30" width="3.87" height="1.2" fill="#111" fill-opacity="0.95"/><rect x="906.52" y="659.30" width="5.38" height="1.2" fill="#111" fill-opacity="0.95"/><rect x="913.22" y="659.30" width="6.79" height="1.2" fill="#111" fill-opacity="0.95"/><rect x="920.94" y="659.30" width="6.55" height="1.2" fill="#111" fill-opacity="0.95"/><rect x="965.5" y="659.30" width="2" height="1.3" fill="#222"/><rect x="894" y="662.55" width="2" height="1.2" fill="#222"/><rect x="901.50" y="662.55" width="6.42" height="1.2" fill="#111" fill-opacity="0.95"/><rect x="908.91" y="662.55" width="3.88" height="1.2" fill="#111" fill-opacity="0.95"/><rect x="913.58" y="662.55" width="6.38" height="1.2" fill="#111" fill-opacity="0.95"/><rect x="920.69" y="662.55" width="2.35" height="1.2" fill="#111" fill-opacity="0.95"/><rect x="965.5" y="662.55" width="2" height="1.3" fill="#222"/><rect x="894" y="665.80" width="2" height="1.2" fill="#222"/><rect x="901.50" y="665.80" width="4.42" height="1.2" fill="#111" fill-opacity="0.95"/><rect x="907.19" y="665.80" width="2.26" height="1.2" fill="#111" fill-opacity="0.95"/><rect x="910.25" y="665.80" width="3.45" height="1.2" fill="#111" fill-opacity="0.95"/><rect x="914.64" y="665.80" width="2.85" height="1.2" fill="#111" fill-opacity="0.95"/><rect x="918.15" y="665.80" width="3.69" height="1.2" fill="#111" fill-opacity="0.95"/><rect x="923.16" y="665.80" width="4.27" height="1.2" fill="#111" fill-opacity="0.95"/><rect x="965.5" y="665.80" width="2" height="1.3" fill="#222"/><rect x="894" y="669.05" width="2" height="1.2" fill="#222"/><rect x="901.50" y="669.05" width="3.26" height="1.2" fill="#111" fill-opacity="0.95"/><rect x="906.13" y="669.05" width="4.63" height="1.2" fill="#111" fill-opacity="0.95"/><rect x="911.94" y="669.05" width="2.14" height="1.2" fill="#111" fill-opacity="0.95"/><rect x="914.85" y="669.05" width="6.19" height="1.2" fill="#111" fill-opacity="0.95"/><rect x="965.5" y="669.05" width="2" height="1.3" fill="#222"/><rect x="894" y="672.30" width="2" height="1.2" fill="#222"/><rect x="901.50" y="672.30" width="5.01" height="1.2" fill="#111" fill-opacity="0.95"/><rect x="907.45" y="672.30" width="4.91" height="1.2" fill="#111" fill-opacity="0.95"/><rect x="913.63" y="672.30" width="3.54" height="1.2" fill="#111" fill-opacity="0.95"/><rect x="918.20" y="672.30" width="3.38" height="1.2" fill="#111" fill-opacity="0.95"/><rect x="922.79" y="672.30" width="2.05" height="1.2" fill="#111" fill-opacity="0.95"/><rect x="925.99" y="672.30" width="3.37" height="1.2" fill="#111" fill-opacity="0.95"/><rect x="965.5" y="672.30" width="2" height="1.3" fill="#222"/><rect x="894" y="675.55" width="2" height="1.2" fill="#222"/><rect x="901.50" y="675.55" width="5.22" height="1.2" fill="#111" fill-opacity="0.95"/><rect x="908.00" y="675.55" width="4.92" height="1.2" fill="#111" fill-opacity="0.95"/><rect x="913.73" y="675.55" width="4.03" height="1.2" fill="#111" fill-opacity="0.95"/><rect x="919.12" y="675.55" width="5.06" height="1.2" fill="#111" fill-opacity="0.95"/><rect x="965.5" y="675.55" width="2" height="1.3" fill="#222"/><rect x="894" y="678.80" width="2" height="1.2" fill="#222"/><rect x="901.50" y="678.80" width="2.47" height="1.2" fill="#111" fill-opacity="0.95"/><rect x="904.59" y="678.80" width="4.23" height="1.2" fill="#111" fill-opacity="0.95"/><rect x="909.54" y="678.80" width="5.67" height="1.2" fill="#111" fill-opacity="0.95"/><rect x="965.5" y="678.80" width="2" height="1.3" fill="#222"/><rect x="894" y="682.05" width="2" height="1.2" fill="#222"/><rect x="901.50" y="682.05" width="4.69" height="1.2" fill="#111" fill-opacity="0.95"/><rect x="907.05" y="682.05" width="4.47" height="1.2" fill="#111" fill-opacity="0.95"/><rect x="912.30" y="682.05" width="2.83" height="1.2" fill="#111" fill-opacity="0.95"/><rect x="965.5" y="682.05" width="2" height="1.3" fill="#222"/><rect x="894" y="685.30" width="2" height="1.2" fill="#222"/><rect x="901.50" y="685.30" width="5.55" height="1.2" fill="#111" fill-opacity="0.95"/><rect x="908.09" y="685.30" width="2.23" height="1.2" fill="#111" fill-opacity="0.95"/><rect x="911.49" y="685.30" width="6.37" height="1.2" fill="#111" fill-opacity="0.95"/><rect x="919.08" y="685.30" width="1.22" height="1.2" fill="#111" fill-opacity="0.95"/><rect x="965.5" y="685.30" width="2" height="1.3" fill="#222"/><rect x="894" y="688.55" width="2" height="1.1" fill="#444"/><rect x="894" y="691.80" width="2" height="1.1" fill="#444"/><rect x="894" y="695.05" width="2" height="1.1" fill="#444"/><rect x="894" y="698.30" width="2" height="1.1" fill="#444"/><rect x="894" y="701.55" width="2" height="1.1" fill="#444"/><rect x="894" y="704.80" width="2" height="1.1" fill="#444"/><rect x="894" y="708.05" width="2" height="1.1" fill="#444"/><rect x="894" y="711.30" width="2" height="1.1" fill="#444"/><rect x="894" y="714.55" width="2" height="1.1" fill="#444"/><rect x="894" y="717.80" width="2" height="1.1" fill="#444"/><path d="M1013.54 632.81 L1023.06 632.81 C1025.78 634.42 1027.14 637.66 1030.54 640.08 C1033.60 642.91 1034.28 650.18 1034.96 665.13 L1035.30 669.57 L1034.62 671.39 L1031.56 671.39 L1030.54 668.76 L1029.52 668.36 L1029.52 672.20 L1007.08 672.20 L1007.08 668.36 L1006.06 668.76 L1005.04 671.39 L1001.98 671.39 L1001.30 669.57 L1001.64 665.13 C1002.32 650.18 1003.00 642.91 1006.06 640.08 C1009.46 637.66 1010.82 634.42 1013.54 632.81 Z" fill="#fff" stroke="#111" stroke-width="1.1" stroke-linejoin="round"/><rect x="1007.25" y="668.56" width="22.10" height="3.43" fill="#c4c4c4"/><path d="M1007.08 642.50 C1008.10 654.22 1006.40 662.30 1007.08 667.96 M1029.52 642.50 C1028.50 654.22 1030.20 662.30 1029.52 667.96" fill="none" stroke="#111" stroke-width="0.55" stroke-opacity="0.6"/><path d="M1013 633 L1018 639 L1023 633 Z" fill="#bbb"/><rect x="1017.8" y="636" width="0.7" height="35" fill="#333"/><circle cx="1007" cy="645" r="0.9" fill="#f0a"/><circle cx="1011" cy="650" r="0.9" fill="#f0a"/><circle cx="1012" cy="657" r="0.9" fill="#f0a"/><circle cx="1009" cy="660" r="0.9" fill="#f0a"/><circle cx="1006" cy="666" r="0.9" fill="#f0a"/><circle cx="1014" cy="643" r="0.9" fill="#f0a"/><circle cx="1022" cy="646" r="0.9" fill="#f0a"/><circle cx="1018" cy="658" r="0.9" fill="#f0a"/><path d="M1003 642 L1033 642 M1004 654 L1032 654 M1005 661 L1016 661" stroke="#f9c" stroke-width="0.4"/><path d="M1013.54 679.32 L1023.06 679.32 C1025.78 680.96 1027.14 684.24 1030.54 686.70 C1033.60 689.57 1034.28 696.95 1034.96 712.12 L1035.30 716.63 L1034.62 718.48 L1031.56 718.48 L1030.54 715.81 L1029.52 715.40 L1029.52 719.29 L1007.08 719.29 L1007.08 715.40 L1006.06 715.81 L1005.04 718.48 L1001.98 718.48 L1001.30 716.63 L1001.64 712.12 C1002.32 696.95 1003.00 689.57 1006.06 686.70 C1009.46 684.24 1010.82 680.96 1013.54 679.32 Z" fill="#fff" stroke="#111" stroke-width="1.1" stroke-linejoin="round"/><rect x="1007.25" y="715.61" width="22.10" height="3.49" fill="#c4c4c4"/><path d="M1007.08 689.16 C1008.10 701.05 1006.40 709.25 1007.08 714.99 M1029.52 689.16 C1028.50 701.05 1030.20 709.25 1029.52 714.99" fill="none" stroke="#111" stroke-width="0.55" stroke-opacity="0.6"/><rect x="1017.8" y="683" width="0.5" height="35" fill="#f9c"/><circle cx="1018" cy="696" r="0.7" fill="#f0a"/><rect x="1013" y="630" width="9" height="1.2" fill="#111"/><rect x="1014" y="677" width="7" height="1.2" fill="#111"/><rect x="1058.8" y="618.3" width="163.5" height="116.8" fill="#3e3e3e" fill-opacity="0.55"/><rect x="1056.3" y="615.3" width="163.5" height="116.8" fill="#000"/><rect x="1058.5" y="617.5" width="159.1" height="112.39999999999999" fill="#fff"/><rect x="1058.8" y="617.9" width="158.5" height="7.4" fill="#000"/><rect x="1060.8" y="620.5" width="16" height="2.4" fill="#fff" fill-opacity="0.9"/><rect x="1058.8" y="723.8" width="158.5" height="4.8" fill="#000"/><rect x="1061.30" y="725.5999999999999" width="4.23" height="1.2" fill="#fff" fill-opacity="0.75"/><rect x="1066.53" y="725.5999999999999" width="12.53" height="1.2" fill="#fff" fill-opacity="0.75"/><rect x="1080.06" y="725.5999999999999" width="11.72" height="1.2" fill="#fff" fill-opacity="0.75"/><rect x="1092.78" y="725.5999999999999" width="13.74" height="1.2" fill="#fff" fill-opacity="0.75"/><rect x="1107.52" y="725.5999999999999" width="6.91" height="1.2" fill="#fff" fill-opacity="0.75"/><rect x="1115.42" y="725.5999999999999" width="13.05" height="1.2" fill="#fff" fill-opacity="0.75"/><rect x="1129.48" y="725.5999999999999" width="13.02" height="1.2" fill="#fff" fill-opacity="0.75"/><rect x="1143.50" y="725.5999999999999" width="9.63" height="1.2" fill="#fff" fill-opacity="0.75"/><rect x="1154.13" y="725.5999999999999" width="8.61" height="1.2" fill="#fff" fill-opacity="0.75"/><rect x="1163.74" y="725.5999999999999" width="13.12" height="1.2" fill="#fff" fill-opacity="0.75"/><rect x="1177.86" y="725.5999999999999" width="3.74" height="1.2" fill="#fff" fill-opacity="0.75"/><rect x="1182.60" y="725.5999999999999" width="10.23" height="1.2" fill="#fff" fill-opacity="0.75"/><rect x="1193.83" y="725.5999999999999" width="4.14" height="1.2" fill="#fff" fill-opacity="0.75"/><rect x="1198.97" y="725.5999999999999" width="10.86" height="1.2" fill="#fff" fill-opacity="0.75"/><rect x="1210.83" y="725.5999999999999" width="2.97" height="1.2" fill="#fff" fill-opacity="0.75"/><rect x="1059.3" y="629.0999999999999" width="157" height="0.8" fill="#d0d0d0"/><rect x="1060.30" y="626.60" width="4.06" height="1.2" fill="#222" fill-opacity="0.8"/><rect x="1059.6" y="629.5" width="157" height="2.8" fill="#a8a8a8"/><rect x="1059.6" y="632.30" width="157" height="3.25" fill="#fbe3d2"/><rect x="1059.6" y="635.30" width="157" height="0.35" fill="#a0a0a0"/><rect x="1059.6" y="635.55" width="157" height="3.25" fill="#e6e6e6"/><rect x="1059.6" y="638.55" width="157" height="0.35" fill="#a0a0a0"/><rect x="1059.6" y="638.80" width="157" height="3.25" fill="#ffffff"/><rect x="1059.6" y="641.80" width="157" height="0.35" fill="#a0a0a0"/><rect x="1059.6" y="642.05" width="157" height="3.25" fill="#e6e6e6"/><rect x="1059.6" y="645.05" width="157" height="0.35" fill="#a0a0a0"/><rect x="1059.6" y="645.30" width="157" height="3.25" fill="#ffffff"/><rect x="1059.6" y="648.30" width="157" height="0.35" fill="#a0a0a0"/><rect x="1059.6" y="648.55" width="157" height="3.25" fill="#fbe3d2"/><rect x="1059.6" y="651.55" width="157" height="0.35" fill="#a0a0a0"/><rect x="1059.6" y="651.80" width="157" height="3.25" fill="#ffffff"/><rect x="1059.6" y="654.80" width="157" height="0.35" fill="#a0a0a0"/><rect x="1059.6" y="655.05" width="157" height="3.25" fill="#e6e6e6"/><rect x="1059.6" y="658.05" width="157" height="0.35" fill="#a0a0a0"/><rect x="1059.6" y="658.30" width="157" height="3.25" fill="#ffffff"/><rect x="1059.6" y="661.30" width="157" height="0.35" fill="#a0a0a0"/><rect x="1059.6" y="661.55" width="157" height="3.25" fill="#e6e6e6"/><rect x="1059.6" y="664.55" width="157" height="0.35" fill="#a0a0a0"/><rect x="1059.6" y="664.80" width="157" height="3.25" fill="#ffffff"/><rect x="1059.6" y="667.80" width="157" height="0.35" fill="#a0a0a0"/><rect x="1059.6" y="668.05" width="157" height="3.25" fill="#e6e6e6"/><rect x="1059.6" y="671.05" width="157" height="0.35" fill="#a0a0a0"/><rect x="1059.6" y="671.30" width="157" height="3.25" fill="#fbe3d2"/><rect x="1059.6" y="674.30" width="157" height="0.35" fill="#a0a0a0"/><rect x="1059.6" y="674.55" width="157" height="3.25" fill="#e6e6e6"/><rect x="1059.6" y="677.55" width="157" height="0.35" fill="#a0a0a0"/><rect x="1059.6" y="677.80" width="157" height="3.25" fill="#ffffff"/><rect x="1059.6" y="680.80" width="157" height="0.35" fill="#a0a0a0"/><rect x="1059.6" y="681.05" width="157" height="3.25" fill="#e6e6e6"/><rect x="1059.6" y="684.05" width="157" height="0.35" fill="#a0a0a0"/><rect x="1059.6" y="684.30" width="157" height="3.25" fill="#ffffff"/><rect x="1059.6" y="687.30" width="157" height="0.35" fill="#a0a0a0"/><rect x="1059.6" y="687.55" width="157" height="3.25" fill="#e6e6e6"/><rect x="1059.6" y="690.55" width="157" height="0.35" fill="#a0a0a0"/><rect x="1059.6" y="690.80" width="157" height="3.25" fill="#ffffff"/><rect x="1059.6" y="693.80" width="157" height="0.35" fill="#a0a0a0"/><rect x="1059.6" y="694.05" width="157" height="3.25" fill="#e6e6e6"/><rect x="1059.6" y="697.05" width="157" height="0.35" fill="#a0a0a0"/><rect x="1059.6" y="697.30" width="157" height="3.25" fill="#ffffff"/><rect x="1059.6" y="700.30" width="157" height="0.35" fill="#a0a0a0"/><rect x="1059.6" y="700.55" width="157" height="3.25" fill="#e6e6e6"/><rect x="1059.6" y="703.55" width="157" height="0.35" fill="#a0a0a0"/><rect x="1059.6" y="703.80" width="157" height="3.25" fill="#ffffff"/><rect x="1059.6" y="706.80" width="157" height="0.35" fill="#a0a0a0"/><rect x="1059.6" y="707.05" width="157" height="3.25" fill="#e6e6e6"/><rect x="1059.6" y="710.05" width="157" height="0.35" fill="#a0a0a0"/><rect x="1059.6" y="710.30" width="157" height="3.25" fill="#ffffff"/><rect x="1059.6" y="713.30" width="157" height="0.35" fill="#a0a0a0"/><rect x="1059.6" y="713.55" width="157" height="3.25" fill="#e6e6e6"/><rect x="1059.6" y="716.55" width="157" height="0.35" fill="#a0a0a0"/><rect x="1059.6" y="716.80" width="157" height="3.25" fill="#ffffff"/><rect x="1059.6" y="719.80" width="157" height="0.35" fill="#a0a0a0"/><rect x="1067.5" y="629.5" width="0.5" height="90.5" fill="#888"/><rect x="1086" y="629.5" width="0.5" height="90.5" fill="#888"/><rect x="1136" y="629.5" width="0.5" height="90.5" fill="#888"/><rect x="1162.5" y="629.5" width="0.5" height="90.5" fill="#888"/><rect x="1174" y="629.5" width="0.5" height="90.5" fill="#888"/><rect x="1186" y="629.5" width="0.5" height="90.5" fill="#888"/><rect x="1195" y="629.5" width="0.5" height="90.5" fill="#888"/><rect x="1206" y="629.5" width="0.5" height="90.5" fill="#888"/><rect x="1059.6" y="720" width="157" height="2.3" fill="#a8a8a8"/><rect x="1062" y="636.55" width="1.5" height="1.2" fill="#222"/><rect x="1069.00" y="636.55" width="5.16" height="1.2" fill="#111" fill-opacity="0.95"/><rect x="1075.41" y="636.55" width="3.01" height="1.2" fill="#111" fill-opacity="0.95"/><rect x="1088.00" y="636.55" width="6.54" height="1.2" fill="#111" fill-opacity="0.95"/><rect x="1095.29" y="636.55" width="5.26" height="1.2" fill="#111" fill-opacity="0.95"/><rect x="1101.65" y="636.55" width="4.52" height="1.2" fill="#111" fill-opacity="0.95"/><rect x="1107.54" y="636.55" width="4.64" height="1.2" fill="#111" fill-opacity="0.95"/><rect x="1113.13" y="636.55" width="6.72" height="1.2" fill="#111" fill-opacity="0.95"/><rect x="1120.96" y="636.55" width="3.51" height="1.2" fill="#111" fill-opacity="0.95"/><rect x="1125.31" y="636.55" width="0.28" height="1.2" fill="#111" fill-opacity="0.95"/><rect x="1138.00" y="636.55" width="5.68" height="1.2" fill="#111" fill-opacity="0.95"/><rect x="1144.62" y="636.55" width="6.23" height="1.2" fill="#111" fill-opacity="0.95"/><rect x="1152.20" y="636.55" width="3.45" height="1.2" fill="#111" fill-opacity="0.95"/><rect x="1163.5" y="636.55" width="3.5" height="1.3" fill="#111"/><rect x="1175" y="636.55" width="3.2" height="1.3" fill="#111"/><rect x="1187" y="636.55" width="6.9" height="1.3" fill="#111"/><rect x="1196.5" y="636.55" width="4.1" height="1.3" fill="#111"/><rect x="1207.5" y="636.55" width="3.9" height="1.3" fill="#111"/><rect x="1062" y="639.80" width="1.5" height="1.2" fill="#222"/><rect x="1069.00" y="639.80" width="5.75" height="1.2" fill="#111" fill-opacity="0.95"/><rect x="1075.45" y="639.80" width="3.61" height="1.2" fill="#111" fill-opacity="0.95"/><rect x="1079.85" y="639.80" width="0.53" height="1.2" fill="#111" fill-opacity="0.95"/><rect x="1088.00" y="639.80" width="3.52" height="1.2" fill="#111" fill-opacity="0.95"/><rect x="1092.44" y="639.80" width="2.93" height="1.2" fill="#111" fill-opacity="0.95"/><rect x="1096.05" y="639.80" width="2.16" height="1.2" fill="#111" fill-opacity="0.95"/><rect x="1099.52" y="639.80" width="5.74" height="1.2" fill="#111" fill-opacity="0.95"/><rect x="1106.30" y="639.80" width="2.62" height="1.2" fill="#111" fill-opacity="0.95"/><rect x="1109.64" y="639.80" width="2.60" height="1.2" fill="#111" fill-opacity="0.95"/><rect x="1113.09" y="639.80" width="2.29" height="1.2" fill="#111" fill-opacity="0.95"/><rect x="1116.20" y="639.80" width="1.35" height="1.2" fill="#111" fill-opacity="0.95"/><rect x="1138.00" y="639.80" width="4.29" height="1.2" fill="#111" fill-opacity="0.95"/><rect x="1143.27" y="639.80" width="3.79" height="1.2" fill="#111" fill-opacity="0.95"/><rect x="1148.09" y="639.80" width="5.93" height="1.2" fill="#111" fill-opacity="0.95"/><rect x="1154.86" y="639.80" width="1.06" height="1.2" fill="#111" fill-opacity="0.95"/><rect x="1163.5" y="639.80" width="4.5" height="1.3" fill="#111"/><rect x="1175" y="639.80" width="6.1" height="1.3" fill="#111"/><rect x="1187" y="639.80" width="3.4" height="1.3" fill="#111"/><rect x="1196.5" y="639.80" width="6.5" height="1.3" fill="#111"/><rect x="1207.5" y="639.80" width="3.1" height="1.3" fill="#111"/><rect x="1062" y="643.05" width="1.5" height="1.2" fill="#222"/><rect x="1069.00" y="643.05" width="4.22" height="1.2" fill="#111" fill-opacity="0.95"/><rect x="1074.07" y="643.05" width="4.18" height="1.2" fill="#111" fill-opacity="0.95"/><rect x="1088.00" y="643.05" width="4.47" height="1.2" fill="#111" fill-opacity="0.95"/><rect x="1093.56" y="643.05" width="2.17" height="1.2" fill="#111" fill-opacity="0.95"/><rect x="1096.40" y="643.05" width="5.01" height="1.2" fill="#111" fill-opacity="0.95"/><rect x="1102.59" y="643.05" width="4.31" height="1.2" fill="#111" fill-opacity="0.95"/><rect x="1107.85" y="643.05" width="1.75" height="1.2" fill="#111" fill-opacity="0.95"/><rect x="1138.00" y="643.05" width="6.81" height="1.2" fill="#111" fill-opacity="0.95"/><rect x="1145.79" y="643.05" width="2.10" height="1.2" fill="#111" fill-opacity="0.95"/><rect x="1148.81" y="643.05" width="6.02" height="1.2" fill="#111" fill-opacity="0.95"/><rect x="1155.69" y="643.05" width="1.57" height="1.2" fill="#111" fill-opacity="0.95"/><rect x="1163.5" y="643.05" width="5.8" height="1.3" fill="#111"/><rect x="1175" y="643.05" width="5.5" height="1.3" fill="#111"/><rect x="1187" y="643.05" width="4.1" height="1.3" fill="#111"/><rect x="1196.5" y="643.05" width="5.5" height="1.3" fill="#111"/><rect x="1207.5" y="643.05" width="6.0" height="1.3" fill="#111"/><rect x="1062" y="652.80" width="1.5" height="1.2" fill="#222"/><rect x="1069.00" y="652.80" width="6.16" height="1.2" fill="#111" fill-opacity="0.95"/><rect x="1076.10" y="652.80" width="4.69" height="1.2" fill="#111" fill-opacity="0.95"/><rect x="1088.00" y="652.80" width="5.75" height="1.2" fill="#111" fill-opacity="0.95"/><rect x="1094.82" y="652.80" width="4.56" height="1.2" fill="#111" fill-opacity="0.95"/><rect x="1100.66" y="652.80" width="5.13" height="1.2" fill="#111" fill-opacity="0.95"/><rect x="1106.96" y="652.80" width="3.14" height="1.2" fill="#111" fill-opacity="0.95"/><rect x="1110.77" y="652.80" width="3.35" height="1.2" fill="#111" fill-opacity="0.95"/><rect x="1115.19" y="652.80" width="4.86" height="1.2" fill="#111" fill-opacity="0.95"/><rect x="1120.82" y="652.80" width="2.94" height="1.2" fill="#111" fill-opacity="0.95"/><rect x="1138.00" y="652.80" width="6.63" height="1.2" fill="#111" fill-opacity="0.95"/><rect x="1145.85" y="652.80" width="4.87" height="1.2" fill="#111" fill-opacity="0.95"/><rect x="1152.11" y="652.80" width="0.31" height="1.2" fill="#111" fill-opacity="0.95"/><rect x="1163.5" y="652.80" width="6.8" height="1.3" fill="#111"/><rect x="1175" y="652.80" width="4.7" height="1.3" fill="#111"/><rect x="1187" y="652.80" width="6.7" height="1.3" fill="#111"/><rect x="1196.5" y="652.80" width="6.3" height="1.3" fill="#111"/><rect x="1207.5" y="652.80" width="3.6" height="1.3" fill="#111"/><rect x="1062" y="656.05" width="1.5" height="1.2" fill="#222"/><rect x="1069.00" y="656.05" width="2.10" height="1.2" fill="#111" fill-opacity="0.95"/><rect x="1072.33" y="656.05" width="2.91" height="1.2" fill="#111" fill-opacity="0.95"/><rect x="1088.00" y="656.05" width="3.83" height="1.2" fill="#111" fill-opacity="0.95"/><rect x="1093.07" y="656.05" width="5.70" height="1.2" fill="#111" fill-opacity="0.95"/><rect x="1100.07" y="656.05" width="6.84" height="1.2" fill="#111" fill-opacity="0.95"/><rect x="1108.11" y="656.05" width="0.37" height="1.2" fill="#111" fill-opacity="0.95"/><rect x="1138.00" y="656.05" width="6.31" height="1.2" fill="#111" fill-opacity="0.95"/><rect x="1145.41" y="656.05" width="3.63" height="1.2" fill="#111" fill-opacity="0.95"/><rect x="1149.74" y="656.05" width="2.29" height="1.2" fill="#111" fill-opacity="0.95"/><rect x="1163.5" y="656.05" width="5.0" height="1.3" fill="#111"/><rect x="1175" y="656.05" width="4.8" height="1.3" fill="#111"/><rect x="1187" y="656.05" width="3.8" height="1.3" fill="#111"/><rect x="1196.5" y="656.05" width="3.3" height="1.3" fill="#111"/><rect x="1207.5" y="656.05" width="3.8" height="1.3" fill="#111"/><rect x="1062" y="659.30" width="1.5" height="1.2" fill="#222"/><rect x="1069.00" y="659.30" width="2.50" height="1.2" fill="#111" fill-opacity="0.95"/><rect x="1072.43" y="659.30" width="2.65" height="1.2" fill="#111" fill-opacity="0.95"/><rect x="1088.00" y="659.30" width="4.30" height="1.2" fill="#111" fill-opacity="0.95"/><rect x="1093.41" y="659.30" width="3.17" height="1.2" fill="#111" fill-opacity="0.95"/><rect x="1097.20" y="659.30" width="2.39" height="1.2" fill="#111" fill-opacity="0.95"/><rect x="1100.47" y="659.30" width="3.81" height="1.2" fill="#111" fill-opacity="0.95"/><rect x="1105.08" y="659.30" width="3.53" height="1.2" fill="#111" fill-opacity="0.95"/><rect x="1109.88" y="659.30" width="2.04" height="1.2" fill="#111" fill-opacity="0.95"/><rect x="1112.88" y="659.30" width="3.91" height="1.2" fill="#111" fill-opacity="0.95"/><rect x="1117.62" y="659.30" width="0.37" height="1.2" fill="#111" fill-opacity="0.95"/><rect x="1138.00" y="659.30" width="2.80" height="1.2" fill="#111" fill-opacity="0.95"/><rect x="1142.18" y="659.30" width="3.73" height="1.2" fill="#111" fill-opacity="0.95"/><rect x="1146.60" y="659.30" width="5.65" height="1.2" fill="#111" fill-opacity="0.95"/><rect x="1163.5" y="659.30" width="6.8" height="1.3" fill="#111"/><rect x="1175" y="659.30" width="4.3" height="1.3" fill="#111"/><rect x="1187" y="659.30" width="6.2" height="1.3" fill="#111"/><rect x="1196.5" y="659.30" width="3.2" height="1.3" fill="#111"/><rect x="1207.5" y="659.30" width="4.0" height="1.3" fill="#111"/><rect x="1062" y="662.55" width="1.5" height="1.2" fill="#222"/><rect x="1069.00" y="662.55" width="4.58" height="1.2" fill="#111" fill-opacity="0.95"/><rect x="1074.81" y="662.55" width="3.93" height="1.2" fill="#111" fill-opacity="0.95"/><rect x="1088.00" y="662.55" width="5.12" height="1.2" fill="#111" fill-opacity="0.95"/><rect x="1093.87" y="662.55" width="3.00" height="1.2" fill="#111" fill-opacity="0.95"/><rect x="1098.17" y="662.55" width="4.15" height="1.2" fill="#111" fill-opacity="0.95"/><rect x="1103.57" y="662.55" width="3.42" height="1.2" fill="#111" fill-opacity="0.95"/><rect x="1138.00" y="662.55" width="5.13" height="1.2" fill="#111" fill-opacity="0.95"/><rect x="1143.92" y="662.55" width="5.34" height="1.2" fill="#111" fill-opacity="0.95"/><rect x="1150.62" y="662.55" width="6.01" height="1.2" fill="#111" fill-opacity="0.95"/><rect x="1163.5" y="662.55" width="4.6" height="1.3" fill="#111"/><rect x="1175" y="662.55" width="3.4" height="1.3" fill="#111"/><rect x="1187" y="662.55" width="6.1" height="1.3" fill="#111"/><rect x="1196.5" y="662.55" width="3.6" height="1.3" fill="#111"/><rect x="1207.5" y="662.55" width="3.9" height="1.3" fill="#111"/><rect x="1062" y="665.80" width="1.5" height="1.2" fill="#222"/><rect x="1069.00" y="665.80" width="2.82" height="1.2" fill="#111" fill-opacity="0.95"/><rect x="1072.73" y="665.80" width="2.47" height="1.2" fill="#111" fill-opacity="0.95"/><rect x="1088.00" y="665.80" width="5.79" height="1.2" fill="#111" fill-opacity="0.95"/><rect x="1094.47" y="665.80" width="2.68" height="1.2" fill="#111" fill-opacity="0.95"/><rect x="1098.16" y="665.80" width="6.52" height="1.2" fill="#111" fill-opacity="0.95"/><rect x="1106.02" y="665.80" width="4.85" height="1.2" fill="#111" fill-opacity="0.95"/><rect x="1111.54" y="665.80" width="3.80" height="1.2" fill="#111" fill-opacity="0.95"/><rect x="1138.00" y="665.80" width="4.65" height="1.2" fill="#111" fill-opacity="0.95"/><rect x="1143.56" y="665.80" width="4.93" height="1.2" fill="#111" fill-opacity="0.95"/><rect x="1149.73" y="665.80" width="6.97" height="1.2" fill="#111" fill-opacity="0.95"/><rect x="1163.5" y="665.80" width="5.0" height="1.3" fill="#111"/><rect x="1175" y="665.80" width="4.2" height="1.3" fill="#111"/><rect x="1187" y="665.80" width="5.2" height="1.3" fill="#111"/><rect x="1196.5" y="665.80" width="5.2" height="1.3" fill="#111"/><rect x="1207.5" y="665.80" width="4.1" height="1.3" fill="#111"/><rect x="1062" y="675.55" width="1.5" height="1.2" fill="#222"/><rect x="1069.00" y="675.55" width="6.58" height="1.2" fill="#111" fill-opacity="0.95"/><rect x="1076.37" y="675.55" width="1.38" height="1.2" fill="#111" fill-opacity="0.95"/><rect x="1088.00" y="675.55" width="3.52" height="1.2" fill="#111" fill-opacity="0.95"/><rect x="1092.78" y="675.55" width="6.64" height="1.2" fill="#111" fill-opacity="0.95"/><rect x="1100.72" y="675.55" width="6.02" height="1.2" fill="#111" fill-opacity="0.95"/><rect x="1107.50" y="675.55" width="4.25" height="1.2" fill="#111" fill-opacity="0.95"/><rect x="1113.01" y="675.55" width="3.23" height="1.2" fill="#111" fill-opacity="0.95"/><rect x="1117.32" y="675.55" width="6.35" height="1.2" fill="#111" fill-opacity="0.95"/><rect x="1138.00" y="675.55" width="2.60" height="1.2" fill="#111" fill-opacity="0.95"/><rect x="1141.22" y="675.55" width="3.58" height="1.2" fill="#111" fill-opacity="0.95"/><rect x="1145.84" y="675.55" width="3.40" height="1.2" fill="#111" fill-opacity="0.95"/><rect x="1150.50" y="675.55" width="3.60" height="1.2" fill="#111" fill-opacity="0.95"/><rect x="1163.5" y="675.55" width="6.3" height="1.3" fill="#111"/><rect x="1175" y="675.55" width="4.3" height="1.3" fill="#111"/><rect x="1187" y="675.55" width="5.6" height="1.3" fill="#111"/><rect x="1196.5" y="675.55" width="4.4" height="1.3" fill="#111"/><rect x="1207.5" y="675.55" width="4.2" height="1.3" fill="#111"/><rect x="1062" y="678.80" width="1.5" height="1.2" fill="#222"/><rect x="1069.00" y="678.80" width="5.94" height="1.2" fill="#111" fill-opacity="0.95"/><rect x="1088.00" y="678.80" width="5.58" height="1.2" fill="#111" fill-opacity="0.95"/><rect x="1094.23" y="678.80" width="4.09" height="1.2" fill="#111" fill-opacity="0.95"/><rect x="1099.17" y="678.80" width="6.51" height="1.2" fill="#111" fill-opacity="0.95"/><rect x="1106.63" y="678.80" width="0.05" height="1.2" fill="#111" fill-opacity="0.95"/><rect x="1138.00" y="678.80" width="3.22" height="1.2" fill="#111" fill-opacity="0.95"/><rect x="1141.87" y="678.80" width="2.07" height="1.2" fill="#111" fill-opacity="0.95"/><rect x="1144.98" y="678.80" width="5.69" height="1.2" fill="#111" fill-opacity="0.95"/><rect x="1151.81" y="678.80" width="1.72" height="1.2" fill="#111" fill-opacity="0.95"/><rect x="1163.5" y="678.80" width="3.3" height="1.3" fill="#111"/><rect x="1175" y="678.80" width="4.7" height="1.3" fill="#111"/><rect x="1187" y="678.80" width="4.3" height="1.3" fill="#111"/><rect x="1196.5" y="678.80" width="3.7" height="1.3" fill="#111"/><rect x="1207.5" y="678.80" width="6.8" height="1.3" fill="#111"/><rect x="1062" y="682.05" width="1.5" height="1.2" fill="#222"/><rect x="1069.00" y="682.05" width="2.66" height="1.2" fill="#111" fill-opacity="0.95"/><rect x="1072.40" y="682.05" width="6.05" height="1.2" fill="#111" fill-opacity="0.95"/><rect x="1088.00" y="682.05" width="3.48" height="1.2" fill="#111" fill-opacity="0.95"/><rect x="1092.34" y="682.05" width="4.94" height="1.2" fill="#111" fill-opacity="0.95"/><rect x="1098.14" y="682.05" width="4.96" height="1.2" fill="#111" fill-opacity="0.95"/><rect x="1103.75" y="682.05" width="4.68" height="1.2" fill="#111" fill-opacity="0.95"/><rect x="1109.49" y="682.05" width="3.14" height="1.2" fill="#111" fill-opacity="0.95"/><rect x="1138.00" y="682.05" width="5.29" height="1.2" fill="#111" fill-opacity="0.95"/><rect x="1144.21" y="682.05" width="2.83" height="1.2" fill="#111" fill-opacity="0.95"/><rect x="1148.14" y="682.05" width="3.45" height="1.2" fill="#111" fill-opacity="0.95"/><rect x="1152.32" y="682.05" width="4.66" height="1.2" fill="#111" fill-opacity="0.95"/><rect x="1163.5" y="682.05" width="5.6" height="1.3" fill="#111"/><rect x="1175" y="682.05" width="6.0" height="1.3" fill="#111"/><rect x="1187" y="682.05" width="3.0" height="1.3" fill="#111"/><rect x="1196.5" y="682.05" width="5.5" height="1.3" fill="#111"/><rect x="1207.5" y="682.05" width="3.8" height="1.3" fill="#111"/><rect x="1062" y="685.30" width="1.5" height="1.2" fill="#222"/><rect x="1069.00" y="685.30" width="5.62" height="1.2" fill="#111" fill-opacity="0.95"/><rect x="1075.99" y="685.30" width="1.03" height="1.2" fill="#111" fill-opacity="0.95"/><rect x="1088.00" y="685.30" width="6.70" height="1.2" fill="#111" fill-opacity="0.95"/><rect x="1095.44" y="685.30" width="5.32" height="1.2" fill="#111" fill-opacity="0.95"/><rect x="1101.43" y="685.30" width="4.80" height="1.2" fill="#111" fill-opacity="0.95"/><rect x="1107.43" y="685.30" width="6.20" height="1.2" fill="#111" fill-opacity="0.95"/><rect x="1138.00" y="685.30" width="4.00" height="1.2" fill="#111" fill-opacity="0.95"/><rect x="1143.10" y="685.30" width="5.24" height="1.2" fill="#111" fill-opacity="0.95"/><rect x="1149.44" y="685.30" width="5.57" height="1.2" fill="#111" fill-opacity="0.95"/><rect x="1163.5" y="685.30" width="6.7" height="1.3" fill="#111"/><rect x="1175" y="685.30" width="5.5" height="1.3" fill="#111"/><rect x="1187" y="685.30" width="6.5" height="1.3" fill="#111"/><rect x="1196.5" y="685.30" width="6.0" height="1.3" fill="#111"/><rect x="1207.5" y="685.30" width="4.5" height="1.3" fill="#111"/><rect x="1069.00" y="633.30" width="6.01" height="1.1" fill="#333" fill-opacity="0.8"/><rect x="1075.90" y="633.30" width="1.10" height="1.1" fill="#333" fill-opacity="0.8"/><rect x="1069.00" y="649.55" width="6.48" height="1.1" fill="#333" fill-opacity="0.8"/><rect x="1076.81" y="649.55" width="0.19" height="1.1" fill="#333" fill-opacity="0.8"/><rect x="1069.00" y="672.30" width="3.44" height="1.1" fill="#333" fill-opacity="0.8"/><rect x="1073.55" y="672.30" width="3.45" height="1.1" fill="#333" fill-opacity="0.8"/><rect x="1062" y="688.55" width="1.5" height="1.2" fill="#333"/><rect x="1062" y="691.80" width="1.5" height="1.2" fill="#333"/><rect x="1062" y="695.05" width="1.5" height="1.2" fill="#333"/><rect x="1062" y="698.30" width="1.5" height="1.2" fill="#333"/><rect x="1062" y="701.55" width="1.5" height="1.2" fill="#333"/><rect x="1062" y="704.80" width="1.5" height="1.2" fill="#333"/><rect x="1062" y="708.05" width="1.5" height="1.2" fill="#333"/><rect x="1062" y="711.30" width="1.5" height="1.2" fill="#333"/><rect x="1062" y="714.55" width="1.5" height="1.2" fill="#333"/></g></svg>
<svg style="left:162px;top:157px" width="13" height="13" viewBox="0 0 13 13"><path d="M1.5 1.5 L11.5 11.5 M11.5 1.5 L1.5 11.5" stroke="#ececec" stroke-width="2.6" stroke-linecap="round"/></svg><div class="t" style="left:194px;top:153px;font-size:21.5px;font-weight:bold;color:#ececec;letter-spacing:0.05px">Tech-pack (Adobe 2024 version).ai @ 6.25 % (CMYK/Preview)</div><div class="a" style="left:844px;top:135px;width:2px;height:57px;background:#3b3b3b"></div><svg style="left:1242px;top:206px" width="16" height="9" viewBox="0 0 16 9"><path d="M1 8 L8 1.5 L15 8" fill="none" stroke="#8a8a8a" stroke-width="2"/></svg><div class="a" style="left:1235px;top:649px;width:30px;height:51px;border-radius:15px;background:#595959"></div><svg style="left:1242px;top:1137px" width="16" height="9" viewBox="0 0 16 9"><path d="M1 1 L8 7.5 L15 1" fill="none" stroke="#8a8a8a" stroke-width="2"/></svg><div class="a" style="left:154px;top:1160px;width:135px;height:30px;background:#464646;border:1px solid #585858;border-bottom:none;border-radius:4px 4px 0 0"></div><div class="a" style="left:254px;top:1161px;width:1px;height:29px;background:#5a5a5a"></div><div class="a" style="left:255px;top:1161px;width:33px;height:29px;background:#4c4c4c"></div><div class="t" style="left:160px;top:1167px;font-size:20.8px;color:#eaeaea">6.25%</div><svg style="left:262px;top:1175px" width="16" height="9" viewBox="0 0 16 9"><path d="M1 1 L8 7.5 L15 1" fill="none" stroke="#e0e0e0" stroke-width="2"/></svg><div class="a" style="left:299px;top:1160px;width:134px;height:30px;background:#464646;border:1px solid #585858;border-bottom:none;border-radius:4px 4px 0 0"></div><div class="a" style="left:398px;top:1161px;width:1px;height:29px;background:#5a5a5a"></div><div class="a" style="left:399px;top:1161px;width:33px;height:29px;background:#4c4c4c"></div><div class="t" style="left:305px;top:1167px;font-size:20.8px;color:#eaeaea">0°</div><svg style="left:406px;top:1175px" width="16" height="9" viewBox="0 0 16 9"><path d="M1 1 L8 7.5 L15 1" fill="none" stroke="#e0e0e0" stroke-width="2"/></svg><div class="a" style="left:434px;top:1160px;width:81px;height:30px;background:#535353;border:1px solid #5a5a5a;border-bottom:none;border-radius:4px 4px 0 0"></div><div class="a" style="left:516px;top:1160px;width:114px;height:30px;background:#464646;border:1px solid #585858;border-bottom:none;border-radius:4px 4px 0 0"></div><div class="a" style="left:596px;top:1161px;width:1px;height:29px;background:#5a5a5a"></div><div class="a" style="left:597px;top:1161px;width:32px;height:29px;background:#4c4c4c"></div><div class="t" style="left:522px;top:1167px;font-size:20.8px;color:#eaeaea">6</div><svg style="left:604px;top:1175px" width="16" height="9" viewBox="0 0 16 9"><path d="M1 1 L8 7.5 L15 1" fill="none" stroke="#e0e0e0" stroke-width="2"/></svg><div class="a" style="left:631px;top:1160px;width:83px;height:30px;background:#535353;border:1px solid #5a5a5a;border-bottom:none;border-radius:4px 4px 0 0"></div><svg style="left:440px;top:1160px" width="280" height="30" viewBox="440 1160 280 30"><rect x="450.5" y="1168" width="3.2" height="16" fill="#b8b8b8"/><path d="M467 1168 L467 1184 L455.5 1176 Z" fill="#b8b8b8"/><path d="M496.4 1168 L496.4 1184 L486 1176 Z" fill="#b8b8b8"/><path d="M650 1168 L650 1184 L660.5 1176 Z" fill="#6e6e6e"/><path d="M680 1168 L680 1184 L691.5 1176 Z" fill="#6e6e6e"/><rect x="693" y="1168" width="3.2" height="16" fill="#6e6e6e"/></svg><div class="a" style="left:714px;top:1160px;width:395px;height:30px;background:#535353;border-left:1px solid #4a4a4a;border-right:1px solid #4a4a4a"></div><div class="t" style="left:832px;top:1168px;font-size:21.6px;color:#c4c4c4">Toggle Selection</div><svg style="left:1122px;top:1167px" width="12" height="18" viewBox="0 0 12 18"><path d="M0.5 0.5 L0.5 17 L10.5 8.8 Z" fill="#c8c8c8"/></svg><div class="a" style="left:1145px;top:1159px;width:89px;height:31px;background:#4b4b4b"></div><svg style="left:1156px;top:1168px" width="66" height="16" viewBox="0 0 66 16"><path d="M8.5 1 L1.5 8 L8.5 15 M57.5 1 L64.5 8 L57.5 15" fill="none" stroke="#9a9a9a" stroke-width="1.8"/></svg><div class="a" style="left:1234px;top:1158px;width:32px;height:32px;background:#535353"></div><div class="a" style="left:146px;top:1158px;width:1120px;height:1px;background:#4a4a4a"></div>

</div>
</div>
</body></html>
